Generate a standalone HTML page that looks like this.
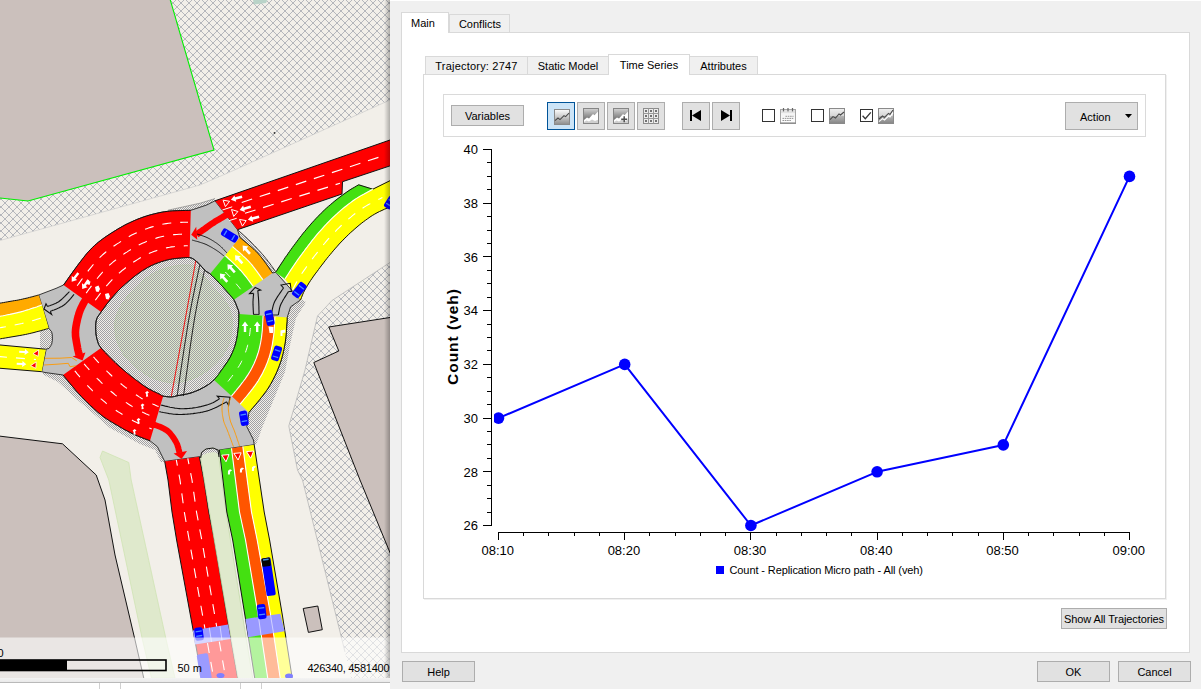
<!DOCTYPE html>
<html><head><meta charset="utf-8"><title>Trajectory</title>
<style>
html,body{margin:0;padding:0;}
body{width:1201px;height:689px;overflow:hidden;position:relative;background:#fff;font-family:"Liberation Sans", sans-serif;font-size:11px;color:#000;}
body>div{position:absolute;white-space:nowrap;}
.tab{text-align:center;}
.btn{background:#e1e1e1;border:1px solid #adadad;box-sizing:border-box;text-align:center;}
svg{position:absolute;left:0;top:0;}
</style></head><body>
<svg width="390" height="678" viewBox="0 0 390 678" style="left:0;top:0;overflow:hidden">
<defs>
<pattern id="xh" patternUnits="userSpaceOnUse" x="0" y="0" width="8" height="8"><g fill="#b5b7bc" shape-rendering="crispEdges"><rect x="0" y="6" width="1" height="1"/><rect x="0" y="7" width="1" height="1"/><rect x="1" y="6" width="1" height="1"/><rect x="1" y="7" width="1" height="1"/><rect x="2" y="0" width="1" height="1"/><rect x="2" y="5" width="1" height="1"/><rect x="3" y="1" width="1" height="1"/><rect x="3" y="4" width="1" height="1"/><rect x="4" y="2" width="1" height="1"/><rect x="4" y="3" width="1" height="1"/><rect x="5" y="2" width="1" height="1"/><rect x="5" y="3" width="1" height="1"/><rect x="6" y="1" width="1" height="1"/><rect x="6" y="4" width="1" height="1"/><rect x="7" y="0" width="1" height="1"/><rect x="7" y="5" width="1" height="1"/></g></pattern>
<pattern id="dn" patternUnits="userSpaceOnUse" x="0" y="0" width="2" height="2"><rect x="0" y="0" width="1" height="1" fill="#a0a0a4" shape-rendering="crispEdges"/><rect x="1" y="1" width="1" height="1" fill="#a0a0a4" shape-rendering="crispEdges"/></pattern>
<linearGradient id="shd" x1="0" x2="1" y1="0" y2="0"><stop offset="0" stop-color="#000" stop-opacity="0"/><stop offset="1" stop-color="#000" stop-opacity="0.28"/></linearGradient>
</defs>
<rect x="0" y="0" width="390" height="678" fill="#f2efe9"/>
<polygon points="0.0,0.0 390.0,0.0 390.0,100.0 230.0,172.0 200.0,185.0 0.0,240.5" fill="url(#xh)" />
<polygon points="390.0,262.5 332.0,300.5 317.5,316.0 305.0,370.0 288.8,426.0 297.5,470.0 302.5,480.0 345.0,652.0 354.0,690.0 392.0,690.0 392.0,262.0" fill="url(#xh)" />
<polyline points="390.0,262.5 332.0,300.5 317.5,316.0 305.0,370.0 288.8,426.0 297.5,470.0 302.5,480.0 345.0,652.0" fill="none" stroke="#b8b8b8" stroke-width="0.8" />
<polyline points="390.0,100.0 230.0,172.0 200.0,185.0 0.0,240.5" fill="none" stroke="#c8c8c8" stroke-width="0.6" />
<polygon points="0.0,0.0 170.0,0.0 214.0,150.0 28.0,201.0 0.0,198.0" fill="#cbc0bc" />
<polyline points="170.0,-1.0 214.0,150.0 28.0,201.0 0.0,198.0" fill="none" stroke="#00ee00" stroke-width="1.1" />
<polygon points="253.0,0.0 267.5,0.0 266.0,3.0 254.0,4.5" fill="#b9d3c8" />
<circle cx="274.5" cy="133" r="0.9" fill="#333"/>
<polygon points="392.0,317.2 328.8,327.0 338.8,351.0 313.8,362.5 360.0,480.0 392.0,557.5" fill="#cbc0bc" stroke="#111" stroke-width="1"/>
<polygon points="-3.0,435.8 62.5,443.8 96.2,475.0 105.0,500.0 115.0,555.0 135.0,640.0 146.5,690.0 -3.0,690.0" fill="#cbc0bc" stroke="#111" stroke-width="1"/>
<polygon points="303.2,608.5 317.8,606.0 322.3,629.7 308.4,632.4" fill="#cbc0bc" stroke="#111" stroke-width="1"/>
<polygon points="102.5,451.0 128.8,462.5 131.2,480.0 166.2,640.0 175.0,678.0 151.5,678.0 142.5,640.0 108.8,480.0 100.0,457.5" fill="#dfe9cc" stroke="#cfe3b4" stroke-width="0.8"/>
<polygon points="168.0,210.2 200.0,203.2 215.0,198.6 215.0,200.8 206.7,205.0 190.8,210.3" fill="url(#dn)" />
<polygon points="237.5,229.7 251.0,242.1 265.0,257.3 275.6,271.5 272.5,273.0 258.0,253.5 239.9,237.5" fill="url(#dn)" />
<polygon points="302.2,299.8 306.0,302.0 296.0,318.0 290.0,345.0 285.0,372.0 262.0,428.0 256.0,445.0 252.0,445.0 246.0,426.0 248.0,411.7 266.7,388.3 278.3,365.0 284.2,341.7 286.7,317.5 290.6,306.8" fill="url(#dn)" />
<polygon points="43.0,371.0 63.0,372.0 82.0,393.0 101.0,411.0 118.0,422.5 135.0,431.5 152.0,437.0 162.0,447.0 166.0,462.0 161.0,462.0 155.0,450.0 140.0,444.0 110.0,428.0 80.0,402.0 58.0,382.0 43.0,374.5" fill="url(#dn)" />
<polygon points="40.0,329.8 49.0,328.6 53.0,332.0 53.5,340.0 52.0,345.0 49.0,349.0 40.0,348.6" fill="url(#dn)" />
<polygon points="200.0,456.5 203.0,450.0 212.0,447.5 219.0,448.5 219.6,452.0 203.0,461.0" fill="url(#dn)" />
<polyline points="168.0,210.2 200.0,203.2 215.0,198.6" fill="none" stroke="#777" stroke-width="0.6" />
<polyline points="237.5,229.7 238.2,230.3 239.0,231.0 239.9,231.9 241.0,232.8 242.1,233.8 243.4,234.9 244.7,236.1 246.0,237.3 247.3,238.5 248.6,239.7 249.8,240.9 251.0,242.1 252.2,243.3 253.3,244.5 254.5,245.7 255.8,247.0 257.0,248.3 258.2,249.6 259.4,250.9 260.6,252.2 261.7,253.5 262.9,254.8 264.0,256.1 265.0,257.3 266.0,258.6 267.1,259.9 268.1,261.3 269.2,262.6 270.2,264.0 271.2,265.4 272.1,266.6 273.0,267.9 273.8,269.0 274.5,270.0 275.1,270.8 275.6,271.5" fill="none" stroke="#222" stroke-width="0.9" />
<polygon points="63.5,285.0 64.8,283.3 66.4,281.0 68.3,278.3 70.4,275.3 72.7,272.1 75.2,268.7 77.7,265.2 80.3,261.8 82.9,258.5 85.4,255.3 87.8,252.5 90.0,250.0 92.1,247.8 94.3,245.8 96.4,243.9 98.4,242.2 100.5,240.5 102.6,239.0 104.7,237.5 106.7,236.1 108.8,234.8 110.9,233.4 112.9,232.1 115.0,230.8 117.1,229.5 119.2,228.3 121.2,227.1 123.3,225.9 125.4,224.8 127.5,223.8 129.6,222.8 131.7,221.8 133.8,220.9 135.8,220.0 137.9,219.1 140.0,218.3 142.1,217.5 144.2,216.8 146.2,216.1 148.3,215.5 150.4,214.9 152.5,214.3 154.5,213.8 156.6,213.3 158.7,212.8 160.8,212.4 162.9,212.0 165.0,211.7 167.2,211.4 169.6,211.1 172.0,211.0 174.5,210.8 177.0,210.7 179.5,210.6 181.8,210.5 184.1,210.5 186.1,210.4 188.0,210.4 189.6,210.4 190.8,210.3 206.7,205.0 215.0,200.8 237.5,229.7 239.9,237.5 239.9,237.5 240.8,238.3 241.9,239.2 243.2,240.3 244.7,241.5 246.3,242.9 248.0,244.3 249.8,245.8 251.6,247.3 253.3,248.9 255.0,250.4 256.6,252.0 258.0,253.5 259.4,255.1 260.8,256.8 262.2,258.6 263.6,260.5 265.0,262.4 266.4,264.2 267.7,266.1 268.9,267.8 270.0,269.4 271.0,270.8 271.8,272.0 272.5,273.0 275.7,272.2 300.5,300.0 290.6,306.8 287.2,317.5 287.1,318.7 287.0,320.1 287.0,321.9 286.9,323.8 286.7,325.9 286.6,328.1 286.5,330.4 286.3,332.8 286.1,335.1 285.9,337.4 285.6,339.6 285.3,341.7 285.0,343.7 284.6,345.7 284.2,347.7 283.8,349.6 283.4,351.6 283.0,353.6 282.5,355.6 282.0,357.5 281.4,359.5 280.8,361.5 280.1,363.4 279.4,365.4 278.6,367.4 277.9,369.3 277.0,371.3 276.2,373.3 275.2,375.3 274.3,377.2 273.3,379.2 272.3,381.2 271.2,383.1 270.0,385.1 268.8,387.0 267.6,389.0 266.2,391.0 264.7,393.2 263.0,395.4 261.2,397.7 259.4,399.9 257.6,402.2 255.8,404.3 254.1,406.3 252.5,408.2 251.1,409.9 249.9,411.3 249.0,412.4 246.8,426.7 253.5,440.0 254.2,444.7 219.4,450.0 199.4,456.7 164.7,461.4 164.0,460.0 157.4,446.7 150.0,440.8 149.2,440.5 148.2,440.1 147.0,439.6 145.7,439.1 144.2,438.6 142.7,438.0 141.1,437.3 139.5,436.7 137.9,436.0 136.3,435.3 134.7,434.7 133.3,434.0 131.9,433.3 130.5,432.7 129.1,432.0 127.8,431.2 126.4,430.5 125.0,429.8 123.6,429.0 122.2,428.2 120.9,427.4 119.5,426.6 118.1,425.8 116.7,425.0 115.3,424.2 114.0,423.4 112.6,422.6 111.3,421.8 109.9,421.0 108.6,420.1 107.2,419.3 105.8,418.3 104.4,417.4 103.0,416.3 101.5,415.2 100.0,414.0 98.4,412.7 96.8,411.3 95.2,409.8 93.5,408.3 91.7,406.7 90.0,405.1 88.3,403.4 86.6,401.7 84.9,400.0 83.2,398.3 81.6,396.6 80.0,395.0 78.4,393.3 76.8,391.5 75.1,389.6 73.5,387.7 71.8,385.7 70.2,383.8 68.7,382.0 67.3,380.2 66.0,378.6 64.8,377.2 63.8,376.0 63.0,375.0 45.0,372.5 41.7,371.7 46.2,349.1 49.0,348.4 51.6,344.5 52.4,340.2 52.3,335.0 51.7,331.9 49.0,328.6 38.7,295.0 56.0,288.4" fill="#c0c0c0" stroke="#222" stroke-width="0.9" stroke-linejoin="round"/>
<polygon points="101.1,312.0 101.7,311.1 102.3,310.2 103.0,309.2 103.8,308.2 104.5,307.2 105.3,306.1 106.1,305.0 106.9,303.9 107.7,302.9 108.6,301.8 109.4,300.8 110.2,299.8 111.0,298.8 111.8,297.9 112.7,296.9 113.5,295.9 114.4,295.0 115.2,294.0 116.1,293.1 117.0,292.1 117.8,291.2 118.7,290.3 119.5,289.5 120.4,288.6 121.3,287.8 122.1,286.9 123.0,286.1 123.8,285.4 124.7,284.6 125.5,283.8 126.4,283.1 127.2,282.4 128.1,281.6 128.9,280.9 129.8,280.2 130.6,279.5 131.4,278.8 132.3,278.1 133.1,277.4 134.0,276.8 134.8,276.1 135.6,275.5 136.5,274.8 137.3,274.2 138.2,273.6 139.0,273.0 139.9,272.4 140.7,271.8 141.5,271.2 142.4,270.7 143.2,270.1 144.1,269.6 144.9,269.1 145.8,268.6 146.6,268.1 147.5,267.6 148.3,267.1 149.2,266.7 150.0,266.2 150.9,265.8 151.8,265.4 152.6,265.0 153.5,264.6 154.3,264.2 155.2,263.9 156.0,263.5 156.9,263.2 157.7,262.9 158.6,262.6 159.4,262.3 160.3,262.0 161.1,261.7 161.9,261.4 162.8,261.2 163.6,260.9 164.5,260.7 165.3,260.4 166.2,260.2 167.0,260.0 167.8,259.8 168.7,259.6 169.5,259.4 170.4,259.3 171.2,259.1 172.1,258.9 172.9,258.8 173.8,258.7 174.7,258.6 175.5,258.5 176.4,258.4 177.3,258.3 178.2,258.2 179.0,258.1 179.8,258.0 180.6,258.0 181.4,257.9 182.2,257.8 182.9,257.8 183.7,257.7 184.4,257.7 185.1,257.6 185.8,257.6 186.5,257.5 187.2,257.5 187.8,257.5 188.4,257.5 189.0,257.6 189.5,257.6 190.0,257.7 190.4,257.7 190.8,257.8 191.2,257.9 191.5,258.1 191.8,258.2 192.1,258.3 192.4,258.5 192.7,258.7 193.0,258.8 193.3,259.0 193.6,259.2 193.9,259.4 194.3,259.6 194.6,259.9 195.0,260.1 195.3,260.4 195.6,260.7 196.0,260.9 196.3,261.2 196.6,261.5 196.9,261.8 197.2,262.0 197.5,262.3 197.8,262.5 198.0,262.8 198.2,263.0 198.5,263.2 198.7,263.4 198.9,263.6 199.1,263.8 199.3,264.0 199.5,264.3 199.8,264.6 200.1,264.9 200.4,265.2 200.7,265.6 201.1,266.0 201.5,266.5 201.9,266.9 202.4,267.4 202.8,268.0 203.3,268.5 203.7,269.0 204.2,269.5 204.6,270.0 205.1,270.4 205.5,270.8 205.9,271.1 206.3,271.4 206.7,271.7 207.0,271.9 207.4,272.1 207.7,272.3 208.1,272.5 208.5,272.8 209.0,273.1 209.5,273.4 210.0,273.9 210.6,274.4 211.3,275.0 212.0,275.7 212.8,276.5 213.7,277.4 214.6,278.2 215.5,279.2 216.4,280.1 217.3,281.0 218.2,282.0 219.1,282.9 219.9,283.8 220.7,284.6 221.5,285.4 222.2,286.2 223.0,287.0 223.7,287.8 224.4,288.6 225.1,289.4 225.8,290.2 226.5,290.9 227.1,291.7 227.7,292.4 228.3,293.1 228.9,293.7 229.4,294.3 229.9,294.9 230.4,295.4 230.9,295.9 231.3,296.4 231.7,296.9 232.1,297.3 232.5,297.8 232.9,298.3 233.2,298.8 233.6,299.3 233.9,299.8 234.2,300.4 234.5,300.9 234.8,301.5 235.1,302.1 235.4,302.7 235.6,303.3 235.9,303.9 236.1,304.5 236.4,305.1 236.6,305.7 236.8,306.3 237.0,306.9 237.2,307.4 237.4,307.9 237.6,308.4 237.8,308.9 238.0,309.3 238.2,309.8 238.4,310.2 238.5,310.8 238.6,311.4 238.8,312.0 238.8,312.8 238.9,313.7 238.9,314.7 238.9,315.8 238.9,317.1 238.9,318.4 238.8,319.8 238.8,321.2 238.7,322.6 238.6,324.1 238.5,325.5 238.4,326.9 238.2,328.3 238.1,329.6 238.0,330.9 237.8,332.1 237.6,333.3 237.5,334.6 237.3,335.8 237.1,337.0 236.9,338.2 236.6,339.4 236.4,340.5 236.1,341.7 235.8,342.9 235.5,344.0 235.2,345.1 234.8,346.3 234.4,347.4 234.1,348.5 233.6,349.6 233.2,350.7 232.8,351.7 232.3,352.8 231.8,353.9 231.3,354.9 230.8,356.0 230.3,357.0 229.7,358.0 229.2,359.0 228.5,360.1 227.9,361.0 227.3,362.0 226.6,363.0 225.9,364.0 225.2,365.0 224.6,365.9 223.9,366.9 223.2,367.8 222.5,368.8 221.8,369.8 221.1,370.7 220.5,371.7 219.8,372.7 219.1,373.7 218.4,374.6 217.7,375.6 217.0,376.5 216.2,377.4 215.5,378.3 214.8,379.1 214.0,379.9 213.2,380.6 212.5,381.3 211.7,382.0 211.0,382.6 210.2,383.2 209.4,383.8 208.6,384.4 207.8,384.9 206.9,385.5 206.0,386.0 205.1,386.6 204.2,387.1 203.2,387.6 202.2,388.2 201.2,388.7 200.1,389.3 199.0,389.8 197.8,390.3 196.7,390.8 195.6,391.2 194.4,391.7 193.3,392.1 192.2,392.5 191.1,392.9 190.0,393.2 188.9,393.5 187.7,393.8 186.5,394.1 185.4,394.3 184.2,394.5 183.1,394.7 182.0,394.9 180.9,395.1 179.9,395.3 179.0,395.4 178.1,395.6 177.3,395.8 176.6,395.9 176.0,396.1 175.4,396.2 174.9,396.3 174.4,396.5 173.9,396.6 173.4,396.7 172.9,396.8 172.4,396.8 171.9,396.9 171.3,396.9 170.7,396.9 170.0,396.9 169.3,396.9 168.5,396.8 167.8,396.8 167.0,396.7 166.3,396.6 165.6,396.5 164.9,396.4 164.3,396.3 163.7,396.2 163.2,396.1 162.8,396.0 162.4,395.9 162.2,395.8 162.0,395.7 161.8,395.6 161.7,395.5 161.5,395.4 161.3,395.2 161.0,395.1 160.7,394.8 160.3,394.6 159.7,394.3 159.0,394.0 158.2,393.6 157.4,393.2 156.4,392.7 155.4,392.3 154.4,391.8 153.3,391.3 152.3,390.8 151.2,390.2 150.1,389.6 149.1,389.1 148.1,388.5 147.1,387.9 146.2,387.3 145.2,386.7 144.2,386.0 143.3,385.3 142.3,384.7 141.3,384.0 140.4,383.3 139.4,382.6 138.4,381.8 137.5,381.1 136.5,380.4 135.5,379.7 134.6,378.9 133.6,378.2 132.6,377.4 131.6,376.7 130.7,375.9 129.7,375.1 128.7,374.3 127.7,373.5 126.7,372.7 125.8,371.9 124.8,371.1 123.8,370.3 122.9,369.5 121.9,368.6 120.9,367.8 120.0,367.0 119.0,366.1 118.1,365.3 117.1,364.4 116.1,363.5 115.2,362.6 114.2,361.7 113.2,360.7 112.2,359.7 111.1,358.6 110.0,357.5 108.9,356.4 107.7,355.2 106.6,354.1 105.5,352.9 104.4,351.8 103.5,350.7 102.5,349.7 101.7,348.8 101.0,347.9 100.4,347.1 99.9,346.4 99.5,345.8 99.1,345.2 98.8,344.7 98.6,344.2 98.4,343.7 98.2,343.2 98.0,342.7 97.9,342.1 97.7,341.5 97.5,340.9 97.3,340.2 97.1,339.5 96.9,338.8 96.7,338.1 96.5,337.3 96.4,336.5 96.3,335.8 96.1,335.0 96.0,334.1 95.9,333.3 95.9,332.5 95.8,331.6 95.8,330.7 95.7,329.8 95.7,328.8 95.7,327.8 95.7,326.7 95.7,325.7 95.7,324.7 95.8,323.7 95.9,322.7 96.0,321.8 96.2,320.8 96.4,320.0 96.6,319.2 96.9,318.5 97.2,317.8 97.5,317.2 97.8,316.6 98.2,316.0 98.6,315.4 99.1,314.8 99.5,314.2 100.0,313.5 100.5,312.8" fill="#f2efe9" />
<polygon points="115.3,320.0 115.5,319.0 115.8,317.9 116.1,316.9 116.5,315.8 116.8,314.7 117.2,313.6 117.7,312.5 118.1,311.4 118.7,310.3 119.2,309.2 119.8,308.0 120.4,306.9 121.1,305.7 121.8,304.6 122.6,303.3 123.4,302.1 124.3,300.9 125.2,299.6 126.1,298.4 127.0,297.2 127.9,296.0 128.8,294.8 129.7,293.7 130.6,292.7 131.4,291.7 132.3,290.7 133.1,289.8 134.0,288.9 134.8,288.0 135.6,287.2 136.5,286.4 137.3,285.6 138.2,284.8 139.0,284.0 139.9,283.2 140.7,282.5 141.5,281.8 142.4,281.1 143.2,280.4 144.1,279.7 144.9,279.0 145.8,278.4 146.6,277.8 147.5,277.2 148.3,276.6 149.2,276.0 150.0,275.4 150.9,274.9 151.8,274.4 152.6,273.9 153.5,273.4 154.3,272.9 155.2,272.5 156.0,272.1 156.9,271.6 157.7,271.3 158.6,270.9 159.4,270.5 160.3,270.1 161.1,269.8 161.9,269.5 162.8,269.2 163.6,268.9 164.5,268.6 165.3,268.3 166.2,268.1 167.0,267.8 167.8,267.6 168.7,267.4 169.5,267.2 170.4,267.0 171.2,266.8 172.1,266.6 172.9,266.4 173.8,266.3 174.7,266.1 175.5,266.0 176.4,265.8 177.3,265.7 178.2,265.6 179.0,265.5 179.8,265.4 180.6,265.3 181.4,265.2 182.2,265.1 182.9,265.1 183.6,265.0 184.3,265.0 185.0,265.0 185.7,265.0 186.3,265.0 187.0,265.0 187.6,265.0 188.3,265.0 188.9,265.1 189.5,265.2 190.1,265.3 190.7,265.4 191.2,265.4 191.7,265.5 192.2,265.6 192.8,265.8 193.3,265.9 193.8,266.1 194.3,266.4 194.8,266.7 195.4,267.0 196.0,267.5 196.6,268.0 197.2,268.6 197.8,269.3 198.5,270.1 199.1,270.9 199.8,271.7 200.4,272.6 201.1,273.5 201.8,274.4 202.5,275.2 203.3,276.1 204.0,277.0 204.8,277.9 205.6,278.8 206.4,279.7 207.2,280.6 208.1,281.5 208.9,282.5 209.8,283.4 210.7,284.4 211.5,285.3 212.4,286.2 213.2,287.1 214.0,288.0 214.8,288.9 215.6,289.7 216.4,290.6 217.2,291.4 218.0,292.2 218.8,293.1 219.5,293.9 220.3,294.7 221.0,295.5 221.7,296.3 222.4,297.2 223.0,298.0 223.6,298.8 224.2,299.7 224.8,300.5 225.3,301.3 225.9,302.2 226.4,303.0 226.9,303.8 227.3,304.7 227.8,305.5 228.2,306.3 228.6,307.2 229.0,308.0 229.4,308.8 229.7,309.7 230.0,310.6 230.3,311.5 230.6,312.4 230.9,313.3 231.1,314.2 231.3,315.0 231.5,315.9 231.7,316.6 231.9,317.3 232.0,318.0 232.1,318.6 232.2,319.0 232.3,319.4 232.4,319.7 232.4,320.0 232.4,320.3 232.4,320.6 232.4,320.9 232.4,321.3 232.4,321.8 232.3,322.3 232.3,323.0 232.3,323.8 232.2,324.7 232.2,325.7 232.1,326.8 232.0,327.9 232.0,329.0 231.9,330.2 231.7,331.4 231.6,332.6 231.4,333.8 231.2,335.0 231.0,336.1 230.7,337.2 230.5,338.3 230.2,339.4 229.9,340.5 229.6,341.6 229.2,342.7 228.8,343.7 228.4,344.8 228.0,345.9 227.5,347.0 227.0,348.1 226.4,349.2 225.8,350.3 225.2,351.4 224.5,352.5 223.8,353.6 223.1,354.8 222.3,355.9 221.5,357.0 220.7,358.1 219.9,359.1 219.0,360.2 218.1,361.2 217.2,362.2 216.3,363.2 215.3,364.1 214.2,365.1 213.2,366.0 212.1,367.0 210.9,367.9 209.8,368.7 208.7,369.6 207.5,370.4 206.4,371.2 205.3,372.0 204.2,372.7 203.1,373.4 202.0,374.1 200.9,374.7 199.8,375.3 198.7,375.9 197.6,376.4 196.6,376.9 195.5,377.4 194.4,377.9 193.3,378.3 192.2,378.8 191.1,379.2 190.0,379.6 188.9,380.0 187.7,380.3 186.5,380.7 185.4,381.0 184.2,381.2 183.1,381.5 182.0,381.7 180.9,382.0 179.9,382.2 179.0,382.3 178.1,382.5 177.3,382.6 176.7,382.7 176.1,382.8 175.6,382.9 175.1,382.9 174.6,383.0 174.2,383.0 173.7,382.9 173.2,382.9 172.6,382.8 172.0,382.8 171.3,382.7 170.5,382.6 169.6,382.5 168.7,382.4 167.8,382.2 166.8,382.0 165.8,381.9 164.8,381.7 163.7,381.4 162.7,381.2 161.7,381.0 160.7,380.7 159.7,380.4 158.7,380.1 157.8,379.8 156.8,379.5 155.8,379.1 154.9,378.8 153.9,378.4 152.9,378.0 152.0,377.6 151.0,377.2 150.0,376.7 149.1,376.2 148.1,375.7 147.1,375.2 146.2,374.6 145.2,374.0 144.2,373.4 143.3,372.7 142.3,372.1 141.3,371.4 140.4,370.7 139.4,370.0 138.4,369.2 137.5,368.4 136.5,367.6 135.5,366.8 134.5,365.9 133.5,365.0 132.4,364.0 131.4,363.1 130.4,362.1 129.3,361.1 128.3,360.1 127.4,359.1 126.5,358.0 125.6,357.0 124.8,356.0 124.0,355.0 123.3,353.9 122.6,352.9 122.0,351.8 121.4,350.7 120.8,349.6 120.2,348.5 119.7,347.4 119.2,346.3 118.8,345.3 118.3,344.2 117.9,343.2 117.5,342.2 117.1,341.2 116.8,340.2 116.5,339.2 116.2,338.3 116.0,337.3 115.8,336.4 115.6,335.4 115.4,334.5 115.3,333.5 115.1,332.6 115.0,331.6 114.9,330.6 114.8,329.7 114.7,328.7 114.7,327.8 114.7,326.8 114.7,325.9 114.7,324.9 114.7,324.0 114.8,323.0 114.9,322.0 115.1,321.0" fill="#dfeacd" stroke="#cdeab0" stroke-width="0.9"/>
<polygon points="101.1,312.0 101.7,311.1 102.3,310.2 103.0,309.2 103.8,308.2 104.5,307.2 105.3,306.1 106.1,305.0 106.9,303.9 107.7,302.9 108.6,301.8 109.4,300.8 110.2,299.8 111.0,298.8 111.8,297.9 112.7,296.9 113.5,295.9 114.4,295.0 115.2,294.0 116.1,293.1 117.0,292.1 117.8,291.2 118.7,290.3 119.5,289.5 120.4,288.6 121.3,287.8 122.1,286.9 123.0,286.1 123.8,285.4 124.7,284.6 125.5,283.8 126.4,283.1 127.2,282.4 128.1,281.6 128.9,280.9 129.8,280.2 130.6,279.5 131.4,278.8 132.3,278.1 133.1,277.4 134.0,276.8 134.8,276.1 135.6,275.5 136.5,274.8 137.3,274.2 138.2,273.6 139.0,273.0 139.9,272.4 140.7,271.8 141.5,271.2 142.4,270.7 143.2,270.1 144.1,269.6 144.9,269.1 145.8,268.6 146.6,268.1 147.5,267.6 148.3,267.1 149.2,266.7 150.0,266.2 150.9,265.8 151.8,265.4 152.6,265.0 153.5,264.6 154.3,264.2 155.2,263.9 156.0,263.5 156.9,263.2 157.7,262.9 158.6,262.6 159.4,262.3 160.3,262.0 161.1,261.7 161.9,261.4 162.8,261.2 163.6,260.9 164.5,260.7 165.3,260.4 166.2,260.2 167.0,260.0 167.8,259.8 168.7,259.6 169.5,259.4 170.4,259.3 171.2,259.1 172.1,258.9 172.9,258.8 173.8,258.7 174.7,258.6 175.5,258.5 176.4,258.4 177.3,258.3 178.2,258.2 179.0,258.1 179.8,258.0 180.6,258.0 181.4,257.9 182.2,257.8 182.9,257.8 183.7,257.7 184.4,257.7 185.1,257.6 185.8,257.6 186.5,257.5 187.2,257.5 187.8,257.5 188.4,257.5 189.0,257.6 189.5,257.6 190.0,257.7 190.4,257.7 190.8,257.8 191.2,257.9 191.5,258.1 191.8,258.2 192.1,258.3 192.4,258.5 192.7,258.7 193.0,258.8 193.3,259.0 193.6,259.2 193.9,259.4 194.3,259.6 194.6,259.9 195.0,260.1 195.3,260.4 195.6,260.7 196.0,260.9 196.3,261.2 196.6,261.5 196.9,261.8 197.2,262.0 197.5,262.3 197.8,262.5 198.0,262.8 198.2,263.0 198.5,263.2 198.7,263.4 198.9,263.6 199.1,263.8 199.3,264.0 199.5,264.3 199.8,264.6 200.1,264.9 200.4,265.2 200.7,265.6 201.1,266.0 201.5,266.5 201.9,266.9 202.4,267.4 202.8,268.0 203.3,268.5 203.7,269.0 204.2,269.5 204.6,270.0 205.1,270.4 205.5,270.8 205.9,271.1 206.3,271.4 206.7,271.7 207.0,271.9 207.4,272.1 207.7,272.3 208.1,272.5 208.5,272.8 209.0,273.1 209.5,273.4 210.0,273.9 210.6,274.4 211.3,275.0 212.0,275.7 212.8,276.5 213.7,277.4 214.6,278.2 215.5,279.2 216.4,280.1 217.3,281.0 218.2,282.0 219.1,282.9 219.9,283.8 220.7,284.6 221.5,285.4 222.2,286.2 223.0,287.0 223.7,287.8 224.4,288.6 225.1,289.4 225.8,290.2 226.5,290.9 227.1,291.7 227.7,292.4 228.3,293.1 228.9,293.7 229.4,294.3 229.9,294.9 230.4,295.4 230.9,295.9 231.3,296.4 231.7,296.9 232.1,297.3 232.5,297.8 232.9,298.3 233.2,298.8 233.6,299.3 233.9,299.8 234.2,300.4 234.5,300.9 234.8,301.5 235.1,302.1 235.4,302.7 235.6,303.3 235.9,303.9 236.1,304.5 236.4,305.1 236.6,305.7 236.8,306.3 237.0,306.9 237.2,307.4 237.4,307.9 237.6,308.4 237.8,308.9 238.0,309.3 238.2,309.8 238.4,310.2 238.5,310.8 238.6,311.4 238.8,312.0 238.8,312.8 238.9,313.7 238.9,314.7 238.9,315.8 238.9,317.1 238.9,318.4 238.8,319.8 238.8,321.2 238.7,322.6 238.6,324.1 238.5,325.5 238.4,326.9 238.2,328.3 238.1,329.6 238.0,330.9 237.8,332.1 237.6,333.3 237.5,334.6 237.3,335.8 237.1,337.0 236.9,338.2 236.6,339.4 236.4,340.5 236.1,341.7 235.8,342.9 235.5,344.0 235.2,345.1 234.8,346.3 234.4,347.4 234.1,348.5 233.6,349.6 233.2,350.7 232.8,351.7 232.3,352.8 231.8,353.9 231.3,354.9 230.8,356.0 230.3,357.0 229.7,358.0 229.2,359.0 228.5,360.1 227.9,361.0 227.3,362.0 226.6,363.0 225.9,364.0 225.2,365.0 224.6,365.9 223.9,366.9 223.2,367.8 222.5,368.8 221.8,369.8 221.1,370.7 220.5,371.7 219.8,372.7 219.1,373.7 218.4,374.6 217.7,375.6 217.0,376.5 216.2,377.4 215.5,378.3 214.8,379.1 214.0,379.9 213.2,380.6 212.5,381.3 211.7,382.0 211.0,382.6 210.2,383.2 209.4,383.8 208.6,384.4 207.8,384.9 206.9,385.5 206.0,386.0 205.1,386.6 204.2,387.1 203.2,387.6 202.2,388.2 201.2,388.7 200.1,389.3 199.0,389.8 197.8,390.3 196.7,390.8 195.6,391.2 194.4,391.7 193.3,392.1 192.2,392.5 191.1,392.9 190.0,393.2 188.9,393.5 187.7,393.8 186.5,394.1 185.4,394.3 184.2,394.5 183.1,394.7 182.0,394.9 180.9,395.1 179.9,395.3 179.0,395.4 178.1,395.6 177.3,395.8 176.6,395.9 176.0,396.1 175.4,396.2 174.9,396.3 174.4,396.5 173.9,396.6 173.4,396.7 172.9,396.8 172.4,396.8 171.9,396.9 171.3,396.9 170.7,396.9 170.0,396.9 169.3,396.9 168.5,396.8 167.8,396.8 167.0,396.7 166.3,396.6 165.6,396.5 164.9,396.4 164.3,396.3 163.7,396.2 163.2,396.1 162.8,396.0 162.4,395.9 162.2,395.8 162.0,395.7 161.8,395.6 161.7,395.5 161.5,395.4 161.3,395.2 161.0,395.1 160.7,394.8 160.3,394.6 159.7,394.3 159.0,394.0 158.2,393.6 157.4,393.2 156.4,392.7 155.4,392.3 154.4,391.8 153.3,391.3 152.3,390.8 151.2,390.2 150.1,389.6 149.1,389.1 148.1,388.5 147.1,387.9 146.2,387.3 145.2,386.7 144.2,386.0 143.3,385.3 142.3,384.7 141.3,384.0 140.4,383.3 139.4,382.6 138.4,381.8 137.5,381.1 136.5,380.4 135.5,379.7 134.6,378.9 133.6,378.2 132.6,377.4 131.6,376.7 130.7,375.9 129.7,375.1 128.7,374.3 127.7,373.5 126.7,372.7 125.8,371.9 124.8,371.1 123.8,370.3 122.9,369.5 121.9,368.6 120.9,367.8 120.0,367.0 119.0,366.1 118.1,365.3 117.1,364.4 116.1,363.5 115.2,362.6 114.2,361.7 113.2,360.7 112.2,359.7 111.1,358.6 110.0,357.5 108.9,356.4 107.7,355.2 106.6,354.1 105.5,352.9 104.4,351.8 103.5,350.7 102.5,349.7 101.7,348.8 101.0,347.9 100.4,347.1 99.9,346.4 99.5,345.8 99.1,345.2 98.8,344.7 98.6,344.2 98.4,343.7 98.2,343.2 98.0,342.7 97.9,342.1 97.7,341.5 97.5,340.9 97.3,340.2 97.1,339.5 96.9,338.8 96.7,338.1 96.5,337.3 96.4,336.5 96.3,335.8 96.1,335.0 96.0,334.1 95.9,333.3 95.9,332.5 95.8,331.6 95.8,330.7 95.7,329.8 95.7,328.8 95.7,327.8 95.7,326.7 95.7,325.7 95.7,324.7 95.8,323.7 95.9,322.7 96.0,321.8 96.2,320.8 96.4,320.0 96.6,319.2 96.9,318.5 97.2,317.8 97.5,317.2 97.8,316.6 98.2,316.0 98.6,315.4 99.1,314.8 99.5,314.2 100.0,313.5 100.5,312.8" fill="url(#dn)" stroke="#111" stroke-width="1"/>
<polyline points="195.8,260.7 171.3,396.5" fill="none" stroke="#f00000" stroke-width="0.9" />
<polyline points="199.7,265.2 199.2,267.8 198.5,270.9 197.7,274.6 196.9,278.6 195.9,283.1 194.9,287.8 193.9,292.9 192.8,298.1 191.7,303.5 190.7,309.0 189.7,314.5 188.7,320.0 187.7,325.8 186.7,332.3 185.6,339.3 184.4,346.6 183.3,354.0 182.2,361.4 181.1,368.6 180.1,375.5 179.2,381.8 178.4,387.5 177.7,392.3 177.1,396.0" fill="none" stroke="#111" stroke-width="0.9" />
<polyline points="204.5,270.3 204.0,272.6 203.4,275.4 202.7,278.6 201.9,282.2 201.0,286.2 200.1,290.4 199.1,294.9 198.1,299.6 197.1,304.6 196.2,309.6 195.2,314.8 194.3,320.0 193.4,325.7 192.4,332.0 191.4,338.9 190.3,346.2 189.3,353.7 188.3,361.1 187.3,368.4 186.3,375.3 185.5,381.7 184.7,387.4 184.0,392.2 183.5,396.0" fill="none" stroke="#111" stroke-width="0.9" />
<polygon points="215.0,200.8 392.0,139.3 392.0,165.2 342.5,181.7 342.0,194.0 237.5,229.7" fill="#ff0000" />
<polyline points="215.0,200.8 392.0,139.3" fill="none" stroke="#111" stroke-width="1" />
<polyline points="392.0,165.2 342.5,181.7 342.0,194.0 237.5,229.7" fill="none" stroke="#111" stroke-width="1" />
<polygon points="-3.0,303.6 -1.8,303.4 -0.4,303.2 1.4,302.9 3.4,302.6 5.5,302.2 7.7,301.8 10.0,301.4 12.3,301.0 14.6,300.6 16.8,300.3 18.8,299.9 20.7,299.5 22.5,299.1 24.2,298.7 26.0,298.3 27.8,297.9 29.5,297.4 31.2,297.0 32.8,296.6 34.2,296.2 35.6,295.8 36.8,295.5 37.8,295.2 38.7,295.0 42.0,305.0 41.0,305.3 39.7,305.8 38.2,306.3 36.6,306.9 34.8,307.5 32.8,308.1 30.8,308.8 28.8,309.5 26.7,310.1 24.6,310.8 22.6,311.4 20.7,311.9 18.7,312.4 16.6,312.9 14.4,313.4 12.1,313.9 9.8,314.4 7.5,314.8 5.3,315.3 3.2,315.7 1.3,316.0 -0.4,316.4 -1.8,316.7 -3.0,316.9" fill="#ffaa00" />
<polygon points="-3.0,316.9 -1.8,316.7 -0.4,316.4 1.3,316.0 3.2,315.7 5.3,315.3 7.5,314.8 9.8,314.4 12.1,313.9 14.4,313.4 16.6,312.9 18.7,312.4 20.7,311.9 22.6,311.4 24.6,310.8 26.7,310.1 28.8,309.5 30.8,308.8 32.8,308.1 34.8,307.5 36.6,306.9 38.2,306.3 39.7,305.8 41.0,305.3 42.0,305.0 48.7,328.4 47.7,328.7 46.5,329.0 45.1,329.4 43.6,329.9 41.9,330.3 40.1,330.9 38.1,331.4 36.1,331.9 34.0,332.5 31.9,333.0 29.8,333.5 27.6,334.0 25.3,334.5 22.7,335.0 19.9,335.5 17.0,336.0 14.0,336.5 11.0,337.0 8.1,337.5 5.3,338.0 2.7,338.4 0.4,338.8 -1.5,339.1 -3.0,339.4" fill="#ffff00" />
<polyline points="-3.0,303.6 -1.8,303.4 -0.4,303.2 1.4,302.9 3.4,302.6 5.5,302.2 7.7,301.8 10.0,301.4 12.3,301.0 14.6,300.6 16.8,300.3 18.8,299.9 20.7,299.5 22.5,299.1 24.2,298.7 26.0,298.3 27.8,297.9 29.5,297.4 31.2,297.0 32.8,296.6 34.2,296.2 35.6,295.8 36.8,295.5 37.8,295.2 38.7,295.0" fill="none" stroke="#111" stroke-width="1" />
<polyline points="-3.0,339.4 -1.5,339.1 0.4,338.8 2.7,338.4 5.3,338.0 8.1,337.5 11.0,337.0 14.0,336.5 17.0,336.0 19.9,335.5 22.7,335.0 25.3,334.5 27.6,334.0 29.8,333.5 31.9,333.0 34.0,332.5 36.1,331.9 38.1,331.4 40.1,330.9 41.9,330.3 43.6,329.9 45.1,329.4 46.5,329.0 47.7,328.7 48.7,328.4" fill="none" stroke="#111" stroke-width="1" />
<polygon points="-2.0,344.8 45.8,349.2 41.7,371.7 -2.0,368.1" fill="#ffff00" />
<polyline points="-2.0,344.8 45.8,349.2" fill="none" stroke="#111" stroke-width="1" />
<polyline points="-2.0,368.1 41.7,371.7" fill="none" stroke="#111" stroke-width="1" />
<polygon points="101.1,312.0 102.2,310.5 103.3,309.0 104.3,307.5 105.4,306.0 106.5,304.6 107.6,303.1 108.7,301.6 109.9,300.2 111.0,298.8 112.2,297.4 113.4,296.0 114.7,294.6 115.9,293.3 117.2,291.9 118.4,290.6 119.7,289.3 121.0,288.0 122.3,286.7 123.7,285.5 125.1,284.2 126.4,283.0 127.8,281.8 129.2,280.6 130.6,279.5 132.1,278.3 133.5,277.1 134.9,276.0 136.4,274.9 137.9,273.8 139.4,272.7 140.9,271.7 142.4,270.7 144.0,269.7 145.5,268.7 147.1,267.8 148.7,266.9 150.4,266.1 152.0,265.3 153.7,264.5 155.4,263.8 157.1,263.1 158.8,262.5 160.6,261.9 162.3,261.3 164.1,260.8 165.8,260.3 167.6,259.9 169.4,259.5 171.2,259.1 173.0,258.8 174.8,258.5 176.7,258.3 178.5,258.2 180.3,258.0 182.2,257.8 184.0,257.7 185.8,257.6 187.7,257.5 189.5,257.4 190.8,210.3 188.2,210.4 185.5,210.4 182.9,210.5 180.3,210.6 177.6,210.7 175.0,210.8 172.4,210.9 169.8,211.1 167.1,211.4 164.5,211.8 161.9,212.2 159.4,212.7 156.8,213.3 154.2,213.9 151.7,214.5 149.1,215.2 146.6,216.0 144.1,216.8 141.6,217.7 139.2,218.6 136.7,219.6 134.3,220.6 131.9,221.7 129.5,222.8 127.1,223.9 124.8,225.1 122.5,226.4 120.2,227.7 117.9,229.0 115.7,230.4 113.4,231.8 111.2,233.2 109.0,234.6 106.8,236.1 104.6,237.5 102.5,239.1 100.4,240.7 98.3,242.3 96.3,244.0 94.3,245.7 92.4,247.5 90.6,249.4 88.8,251.3 87.0,253.3 85.4,255.3 83.7,257.4 82.1,259.5 80.5,261.6 78.9,263.7 77.3,265.8 75.8,267.9 74.2,270.0 72.7,272.2 71.2,274.3 69.6,276.4 68.1,278.6 66.6,280.7 65.1,282.9 63.5,285.0" fill="#ff0000" />
<polygon points="101.0,347.9 101.9,348.9 102.8,349.9 103.8,350.8 104.7,351.8 105.6,352.8 106.5,353.8 107.4,354.8 108.4,355.7 109.3,356.7 110.2,357.7 111.1,358.6 112.1,359.6 113.0,360.5 114.0,361.5 115.0,362.4 116.0,363.3 117.0,364.2 117.9,365.1 118.9,366.0 120.0,366.9 121.0,367.8 122.0,368.7 123.0,369.6 124.0,370.4 125.0,371.3 126.1,372.2 127.1,373.0 128.2,373.9 129.2,374.7 130.2,375.6 131.3,376.4 132.4,377.2 133.4,378.1 134.5,378.9 135.6,379.7 136.6,380.5 137.7,381.3 138.8,382.1 139.9,382.9 140.9,383.7 142.0,384.5 143.1,385.3 144.2,386.0 145.4,386.8 146.5,387.5 147.6,388.2 148.8,388.9 150.0,389.5 151.1,390.2 152.3,390.8 153.5,391.4 154.8,392.0 156.0,392.5 157.2,393.1 158.4,393.7 159.6,394.3 160.8,394.9 162.0,395.5 163.2,396.1 150.0,440.8 148.3,440.1 146.5,439.4 144.7,438.8 143.0,438.1 141.2,437.4 139.5,436.7 137.8,436.0 136.0,435.2 134.3,434.5 132.6,433.7 130.9,432.9 129.3,432.0 127.6,431.1 125.9,430.3 124.3,429.4 122.6,428.5 121.0,427.5 119.4,426.6 117.8,425.6 116.2,424.7 114.5,423.7 112.9,422.8 111.3,421.8 109.7,420.8 108.1,419.8 106.5,418.8 105.0,417.8 103.5,416.7 101.9,415.5 100.5,414.4 99.0,413.2 97.6,412.0 96.2,410.7 94.8,409.5 93.4,408.2 92.0,406.9 90.6,405.7 89.3,404.4 87.9,403.0 86.6,401.7 85.3,400.4 83.9,399.1 82.6,397.7 81.3,396.4 80.0,395.0 78.7,393.7 77.5,392.3 76.2,390.9 75.0,389.4 73.8,388.0 72.6,386.6 71.4,385.1 70.2,383.7 69.0,382.3 67.8,380.8 66.6,379.3 65.4,377.9 64.2,376.4 63.0,375.0" fill="#ff0000" />
<polygon points="210.4,273.6 211.2,274.5 212.1,275.4 212.9,276.3 213.7,277.1 214.6,278.0 215.4,278.9 216.2,279.8 217.1,280.7 217.9,281.6 218.7,282.5 219.5,283.3 220.4,284.2 221.2,285.1 222.0,286.0 222.8,286.9 223.6,287.8 224.5,288.7 225.3,289.6 226.1,290.5 226.9,291.4 227.7,292.3 228.5,293.2 229.3,294.2 230.1,295.1 230.9,296.0 231.6,297.0 232.4,297.9 233.1,298.9 233.9,299.8 253.2,286.4 252.3,285.2 251.5,284.1 250.6,282.9 249.8,281.8 248.9,280.6 248.0,279.5 247.1,278.3 246.3,277.2 245.4,276.1 244.4,274.9 243.5,273.8 242.6,272.7 241.7,271.6 240.7,270.5 239.7,269.5 238.7,268.4 237.7,267.4 236.7,266.4 235.7,265.4 234.6,264.4 233.6,263.4 232.6,262.4 231.5,261.4 230.4,260.4 229.4,259.5 228.3,258.5 227.3,257.5 226.2,256.5 225.2,255.6" fill="#44e011" />
<polygon points="225.2,255.6 226.2,256.5 227.3,257.5 228.3,258.5 229.4,259.5 230.4,260.4 231.5,261.4 232.6,262.4 233.6,263.4 234.6,264.4 235.7,265.4 236.7,266.4 237.7,267.4 238.7,268.4 239.7,269.5 240.7,270.5 241.7,271.6 242.6,272.7 243.5,273.8 244.4,274.9 245.4,276.1 246.3,277.2 247.1,278.3 248.0,279.5 248.9,280.6 249.8,281.8 250.6,282.9 251.5,284.1 252.3,285.2 253.2,286.4 262.9,279.7 261.9,278.4 261.0,277.2 260.1,275.9 259.2,274.6 258.3,273.4 257.4,272.1 256.5,270.9 255.5,269.6 254.6,268.4 253.6,267.2 252.7,265.9 251.7,264.7 250.7,263.5 249.7,262.4 248.6,261.2 247.5,260.1 246.4,259.0 245.3,257.9 244.2,256.8 243.0,255.8 241.9,254.7 240.7,253.7 239.6,252.7 238.4,251.6 237.2,250.6 236.0,249.6 234.9,248.6 233.7,247.6 232.5,246.5" fill="#ffff00" />
<polygon points="232.5,246.5 233.7,247.6 234.9,248.6 236.0,249.6 237.2,250.6 238.4,251.6 239.6,252.7 240.7,253.7 241.9,254.7 243.0,255.8 244.2,256.8 245.3,257.9 246.4,259.0 247.5,260.1 248.6,261.2 249.7,262.4 250.7,263.5 251.7,264.7 252.7,265.9 253.6,267.2 254.6,268.4 255.5,269.6 256.5,270.9 257.4,272.1 258.3,273.4 259.2,274.6 260.1,275.9 261.0,277.2 261.9,278.4 262.9,279.7 272.5,273.0 271.5,271.6 270.6,270.3 269.6,268.9 268.7,267.5 267.7,266.1 266.8,264.8 265.8,263.4 264.8,262.1 263.8,260.7 262.8,259.4 261.8,258.0 260.8,256.7 259.7,255.4 258.6,254.2 257.5,252.9 256.3,251.7 255.1,250.6 253.9,249.4 252.7,248.3 251.4,247.2 250.2,246.1 248.9,245.0 247.6,243.9 246.3,242.8 245.0,241.8 243.8,240.7 242.5,239.7 241.2,238.6 239.9,237.5" fill="#ffaa00" />
<polygon points="238.9,313.9 238.8,315.4 238.8,316.9 238.7,318.3 238.7,319.8 238.6,321.3 238.6,322.8 238.5,324.3 238.4,325.7 238.3,327.2 238.2,328.7 238.0,330.2 237.9,331.6 237.7,333.1 237.5,334.6 237.2,336.0 237.0,337.5 236.7,338.9 236.4,340.4 236.1,341.8 235.7,343.3 235.3,344.7 234.9,346.1 234.4,347.5 233.9,348.9 233.4,350.3 232.8,351.7 232.2,353.0 231.6,354.4 231.0,355.7 230.3,357.0 229.6,358.3 228.8,359.6 228.0,360.8 227.2,362.1 226.4,363.3 225.6,364.5 224.7,365.7 223.8,366.9 223.0,368.1 222.1,369.3 221.2,370.5 220.4,371.7 219.5,372.9 218.6,374.1 217.6,375.2 216.7,376.4 215.8,377.6 214.9,378.7 214.0,379.9 231.5,396.1 232.6,394.7 233.8,393.3 234.9,391.9 236.1,390.5 237.2,389.1 238.4,387.7 239.5,386.3 240.6,384.9 241.7,383.4 242.8,382.0 243.9,380.5 245.0,379.1 246.0,377.6 247.0,376.1 248.0,374.6 249.0,373.0 249.9,371.5 250.8,369.9 251.7,368.3 252.5,366.7 253.3,365.1 254.1,363.4 254.8,361.8 255.5,360.1 256.2,358.4 256.8,356.7 257.4,355.0 258.0,353.3 258.5,351.6 259.0,349.8 259.4,348.1 259.8,346.3 260.2,344.5 260.6,342.7 260.9,341.0 261.2,339.2 261.5,337.4 261.7,335.6 261.9,333.8 262.1,332.0 262.3,330.2 262.4,328.4 262.5,326.6 262.6,324.8 262.7,322.9 262.8,321.1 262.9,319.3 263.0,317.5 263.1,315.7" fill="#44e011" />
<polygon points="263.1,315.7 263.0,317.5 262.9,319.3 262.8,321.1 262.7,322.9 262.6,324.8 262.5,326.6 262.4,328.4 262.3,330.2 262.1,332.0 261.9,333.8 261.7,335.6 261.5,337.4 261.2,339.2 260.9,341.0 260.6,342.7 260.2,344.5 259.8,346.3 259.4,348.1 259.0,349.8 258.5,351.6 258.0,353.3 257.4,355.0 256.8,356.7 256.2,358.4 255.5,360.1 254.8,361.8 254.1,363.4 253.3,365.1 252.5,366.7 251.7,368.3 250.8,369.9 249.9,371.5 249.0,373.0 248.0,374.6 247.0,376.1 246.0,377.6 245.0,379.1 243.9,380.5 242.8,382.0 241.7,383.4 240.6,384.9 239.5,386.3 238.4,387.7 237.2,389.1 236.1,390.5 234.9,391.9 233.8,393.3 232.6,394.7 231.5,396.1 240.1,404.1 241.3,402.6 242.6,401.1 243.8,399.5 245.1,398.0 246.4,396.5 247.6,395.0 248.9,393.4 250.1,391.9 251.3,390.3 252.5,388.8 253.7,387.2 254.9,385.6 256.0,384.0 257.1,382.4 258.2,380.7 259.2,379.0 260.2,377.3 261.2,375.6 262.2,373.9 263.1,372.1 263.9,370.3 264.8,368.5 265.6,366.7 266.3,364.9 267.1,363.1 267.8,361.2 268.4,359.4 269.1,357.5 269.7,355.6 270.2,353.7 270.7,351.8 271.2,349.9 271.6,348.0 272.0,346.0 272.4,344.1 272.7,342.1 273.0,340.2 273.3,338.2 273.6,336.3 273.8,334.3 274.0,332.4 274.1,330.4 274.3,328.4 274.4,326.4 274.5,324.5 274.6,322.5 274.7,320.5 274.8,318.6 274.9,316.6" fill="#ff5500" />
<polygon points="274.9,316.6 274.8,318.6 274.7,320.5 274.6,322.5 274.5,324.5 274.4,326.4 274.3,328.4 274.1,330.4 274.0,332.4 273.8,334.3 273.6,336.3 273.3,338.2 273.0,340.2 272.7,342.1 272.4,344.1 272.0,346.0 271.6,348.0 271.2,349.9 270.7,351.8 270.2,353.7 269.7,355.6 269.1,357.5 268.4,359.4 267.8,361.2 267.1,363.1 266.3,364.9 265.6,366.7 264.8,368.5 263.9,370.3 263.1,372.1 262.2,373.9 261.2,375.6 260.2,377.3 259.2,379.0 258.2,380.7 257.1,382.4 256.0,384.0 254.9,385.6 253.7,387.2 252.5,388.8 251.3,390.3 250.1,391.9 248.9,393.4 247.6,395.0 246.4,396.5 245.1,398.0 243.8,399.5 242.6,401.1 241.3,402.6 240.1,404.1 249.0,412.4 250.4,410.7 251.7,409.1 253.1,407.5 254.5,405.8 255.9,404.2 257.3,402.5 258.6,400.9 260.0,399.2 261.3,397.5 262.6,395.9 263.9,394.1 265.2,392.4 266.5,390.7 267.7,388.9 268.8,387.1 269.9,385.3 271.0,383.4 272.0,381.5 273.1,379.6 274.0,377.7 275.0,375.8 275.9,373.9 276.8,371.9 277.6,369.9 278.4,367.9 279.2,365.9 279.9,363.9 280.6,361.9 281.3,359.9 281.9,357.8 282.4,355.7 283.0,353.6 283.4,351.6 283.9,349.5 284.3,347.4 284.7,345.2 285.1,343.1 285.4,341.0 285.7,338.9 285.9,336.8 286.1,334.6 286.3,332.5 286.5,330.3 286.6,328.2 286.7,326.1 286.8,323.9 287.0,321.8 287.1,319.6 287.2,317.5" fill="#ffff00" />
<polygon points="275.7,272.2 277.1,270.1 278.4,268.0 279.8,265.9 281.1,263.9 282.5,261.8 283.9,259.7 285.2,257.6 286.7,255.6 288.1,253.6 289.5,251.5 291.0,249.5 292.4,247.5 293.9,245.5 295.4,243.5 296.9,241.5 298.4,239.5 299.9,237.5 301.4,235.6 302.9,233.6 304.5,231.7 306.1,229.8 307.7,227.8 309.3,226.0 310.9,224.1 312.6,222.2 314.3,220.4 315.9,218.6 317.7,216.8 319.4,215.0 321.2,213.2 322.9,211.5 324.7,209.8 326.5,208.1 328.4,206.4 330.3,204.8 332.2,203.2 334.1,201.6 336.0,200.0 338.0,198.5 340.0,197.0 341.9,195.5 344.0,194.0 346.0,192.6 348.0,191.2 350.1,189.8 352.2,188.5 354.4,187.3 356.5,186.0 358.7,184.8 372.8,189.2 372.8,189.2 370.5,190.4 368.2,191.7 366.0,192.9 363.7,194.2 361.4,195.4 359.2,196.7 357.0,198.1 354.8,199.5 352.7,201.0 350.6,202.6 348.5,204.1 346.5,205.7 344.5,207.3 342.5,208.9 340.5,210.6 338.5,212.3 336.6,214.1 334.7,215.8 332.8,217.6 331.0,219.4 329.1,221.3 327.3,223.1 325.6,225.0 323.8,226.9 322.1,228.8 320.3,230.8 318.6,232.7 316.9,234.7 315.3,236.7 313.7,238.7 312.0,240.7 310.4,242.8 308.8,244.8 307.3,246.9 305.7,248.9 304.2,251.0 302.6,253.1 301.1,255.2 299.5,257.3 298.0,259.4 296.5,261.5 295.1,263.6 293.6,265.8 292.2,267.9 290.7,270.1 289.3,272.3 287.9,274.5 286.5,276.6 285.1,278.8" fill="#44e011" stroke="#44e011" stroke-width="0.5"/>
<polygon points="285.1,278.8 286.5,276.6 287.9,274.5 289.3,272.3 290.7,270.1 292.2,267.9 293.6,265.8 295.1,263.6 296.5,261.5 298.0,259.4 299.5,257.3 301.1,255.2 302.6,253.1 304.2,251.0 305.7,248.9 307.3,246.9 308.8,244.8 310.4,242.8 312.0,240.7 313.7,238.7 315.3,236.7 316.9,234.7 318.6,232.7 320.3,230.8 322.1,228.8 323.8,226.9 325.6,225.0 327.3,223.1 329.1,221.3 331.0,219.4 332.8,217.6 334.7,215.8 336.6,214.1 338.5,212.3 340.5,210.6 342.5,208.9 344.5,207.3 346.5,205.7 348.5,204.1 350.6,202.6 352.7,201.0 354.8,199.5 357.0,198.1 359.2,196.7 361.4,195.4 363.7,194.2 366.0,192.9 368.2,191.7 370.5,190.4 372.8,189.2 392.0,179.7 392.0,206.0 389.5,207.1 387.0,208.2 384.5,209.2 382.0,210.4 379.5,211.5 377.0,212.8 374.7,214.1 372.3,215.5 370.0,217.0 367.8,218.6 365.6,220.2 363.4,221.8 361.2,223.5 359.1,225.2 357.0,227.0 354.9,228.8 352.9,230.6 350.8,232.4 348.8,234.3 346.9,236.2 344.9,238.1 343.0,240.1 341.1,242.0 339.2,244.0 337.4,246.1 335.6,248.1 333.8,250.2 332.0,252.3 330.3,254.4 328.5,256.5 326.8,258.6 325.1,260.8 323.5,262.9 321.8,265.1 320.1,267.3 318.5,269.5 316.9,271.7 315.2,273.9 313.6,276.1 312.1,278.3 310.5,280.6 309.0,282.9 307.6,285.2 306.2,287.6 304.8,290.0 303.6,292.4 302.5,294.9 301.5,297.5 300.5,300.0" fill="#ffff00" stroke="#ffff00" stroke-width="0.5"/>
<polyline points="275.7,272.2 277.1,270.1 278.4,268.0 279.8,265.9 281.1,263.9 282.5,261.8 283.9,259.7 285.2,257.6 286.7,255.6 288.1,253.6 289.5,251.5 291.0,249.5 292.4,247.5 293.9,245.5 295.4,243.5 296.9,241.5 298.4,239.5 299.9,237.5 301.4,235.6 302.9,233.6 304.5,231.7 306.1,229.8 307.7,227.8 309.3,226.0 310.9,224.1 312.6,222.2 314.3,220.4 315.9,218.6 317.7,216.8 319.4,215.0 321.2,213.2 322.9,211.5 324.7,209.8 326.5,208.1 328.4,206.4 330.3,204.8 332.2,203.2 334.1,201.6 336.0,200.0 338.0,198.5 340.0,197.0 341.9,195.5 344.0,194.0 346.0,192.6 348.0,191.2 350.1,189.8 352.2,188.5 354.4,187.3 356.5,186.0 358.7,184.8 372.8,189.2 392.0,179.7" fill="none" stroke="#111" stroke-width="1" />
<polyline points="300.5,300.0 301.5,297.5 302.5,294.9 303.6,292.4 304.8,290.0 306.2,287.6 307.6,285.2 309.0,282.9 310.5,280.6 312.1,278.3 313.6,276.1 315.2,273.9 316.9,271.7 318.5,269.5 320.1,267.3 321.8,265.1 323.5,262.9 325.1,260.8 326.8,258.6 328.5,256.5 330.3,254.4 332.0,252.3 333.8,250.2 335.6,248.1 337.4,246.1 339.2,244.0 341.1,242.0 343.0,240.1 344.9,238.1 346.9,236.2 348.8,234.3 350.8,232.4 352.9,230.6 354.9,228.8 357.0,227.0 359.1,225.2 361.2,223.5 363.4,221.8 365.6,220.2 367.8,218.6 370.0,217.0 372.3,215.5 374.7,214.1 377.0,212.8 379.5,211.5 382.0,210.4 384.5,209.2 387.0,208.2 389.5,207.1 392.0,206.0" fill="none" stroke="#111" stroke-width="1" />
<polygon points="164.7,461.4 168.0,480.0 172.0,512.0 176.6,540.0 192.2,625.0 202.0,680.0 238.0,680.0 228.5,625.0 214.4,540.0 208.8,512.0 204.0,480.0 199.4,456.7" fill="#ff0000" />
<polyline points="164.7,461.4 168.0,480.0 172.0,512.0 176.6,540.0 192.2,625.0 202.0,680.0" fill="none" stroke="#111" stroke-width="1" />
<polyline points="199.4,456.7 204.0,480.0 208.8,512.0 214.4,540.0 228.5,625.0 238.0,680.0" fill="none" stroke="#111" stroke-width="1" />
<polygon points="200.7,458.0 201.5,452.5 206.0,449.0 213.0,448.0 218.0,450.0 218.8,457.0 226.0,512.0 244.0,625.0 253.0,680.0 238.5,680.0 228.8,625.0 209.5,512.0" fill="#dfe9cc" stroke="#c4dba8" stroke-width="0.8"/>
<polygon points="201.0,456.0 201.5,452.5 206.0,449.0 213.0,448.0 218.0,450.0 218.8,454.0 214.0,452.0 207.0,453.0" fill="#f2efe9" />
<polygon points="201.0,456.0 201.5,452.5 206.0,449.0 213.0,448.0 218.0,450.0 218.8,454.0 214.0,452.0 207.0,453.0" fill="url(#dn)" />
<polyline points="200.7,458.0 201.5,452.5 206.0,449.0 213.0,448.0 218.0,450.0 219.0,457.0" fill="none" stroke="#111" stroke-width="1" />
<polygon points="219.4,450.0 226.8,512.0 232.7,540.0 245.5,618.9 255.0,680.0 268.0,680.0 258.7,618.0 245.5,540.0 239.5,512.0 231.5,448.2" fill="#44e011" />
<polygon points="231.5,448.2 239.5,512.0 245.5,540.0 258.7,618.0 268.0,680.0 280.5,680.0 271.0,617.0 257.2,540.0 251.5,512.0 242.8,446.4" fill="#ff5500" />
<polygon points="242.8,446.4 251.5,512.0 257.2,540.0 271.0,617.0 280.5,680.0 292.5,680.0 282.5,616.0 269.6,540.0 264.2,512.0 254.2,444.7" fill="#ffff00" />
<polyline points="219.4,450.0 226.8,512.0 232.7,540.0 245.5,618.9 255.0,680.0" fill="none" stroke="#111" stroke-width="1" />
<polyline points="254.2,444.7 264.2,512.0 269.6,540.0 282.5,616.0 292.5,680.0" fill="none" stroke="#111" stroke-width="1" />
<polyline points="63.5,285.0 65.1,282.9 66.6,280.7 68.1,278.6 69.6,276.4 71.2,274.3 72.7,272.2 74.2,270.0 75.8,267.9 77.3,265.8 78.9,263.7 80.5,261.6 82.1,259.5 83.7,257.4 85.4,255.3 87.0,253.3 88.8,251.3 90.6,249.4 92.4,247.5 94.3,245.7 96.3,244.0 98.3,242.3 100.4,240.7 102.5,239.1 104.6,237.5 106.8,236.1 109.0,234.6 111.2,233.2 113.4,231.8 115.7,230.4 117.9,229.0 120.2,227.7 122.5,226.4 124.8,225.1 127.1,223.9 129.5,222.8 131.9,221.7 134.3,220.6 136.7,219.6 139.2,218.6 141.6,217.7 144.1,216.8 146.6,216.0 149.1,215.2 151.7,214.5 154.2,213.9 156.8,213.3 159.4,212.7 161.9,212.2 164.5,211.8 167.1,211.4 169.8,211.1 172.4,210.9 175.0,210.8 177.6,210.7 180.3,210.6 182.9,210.5 185.5,210.4 188.2,210.4 190.8,210.3" fill="none" stroke="#111" stroke-width="1" />
<polyline points="63.0,375.0 64.2,376.4 65.4,377.9 66.6,379.3 67.8,380.8 69.0,382.3 70.2,383.7 71.4,385.1 72.6,386.6 73.8,388.0 75.0,389.4 76.2,390.9 77.5,392.3 78.7,393.7 80.0,395.0 81.3,396.4 82.6,397.7 83.9,399.1 85.3,400.4 86.6,401.7 87.9,403.0 89.3,404.4 90.6,405.7 92.0,406.9 93.4,408.2 94.8,409.5 96.2,410.7 97.6,412.0 99.0,413.2 100.5,414.4 101.9,415.5 103.5,416.7 105.0,417.8 106.5,418.8 108.1,419.8 109.7,420.8 111.3,421.8 112.9,422.8 114.5,423.7 116.2,424.7 117.8,425.6 119.4,426.6 121.0,427.5 122.6,428.5 124.3,429.4 125.9,430.3 127.6,431.1 129.3,432.0 130.9,432.9 132.6,433.7 134.3,434.5 136.0,435.2 137.8,436.0 139.5,436.7 141.2,437.4 143.0,438.1 144.7,438.8 146.5,439.4 148.3,440.1 150.0,440.8" fill="none" stroke="#111" stroke-width="1" />
<polyline points="287.2,317.5 287.1,319.6 287.0,321.8 286.8,323.9 286.7,326.1 286.6,328.2 286.5,330.3 286.3,332.5 286.1,334.6 285.9,336.8 285.7,338.9 285.4,341.0 285.1,343.1 284.7,345.2 284.3,347.4 283.9,349.5 283.4,351.6 283.0,353.6 282.4,355.7 281.9,357.8 281.3,359.9 280.6,361.9 279.9,363.9 279.2,365.9 278.4,367.9 277.6,369.9 276.8,371.9 275.9,373.9 275.0,375.8 274.0,377.7 273.1,379.6 272.0,381.5 271.0,383.4 269.9,385.3 268.8,387.1 267.7,388.9 266.5,390.7 265.2,392.4 263.9,394.1 262.6,395.9 261.3,397.5 260.0,399.2 258.6,400.9 257.3,402.5 255.9,404.2 254.5,405.8 253.1,407.5 251.7,409.1 250.4,410.7 249.0,412.4" fill="none" stroke="#111" stroke-width="1" />
<polyline points="239.9,237.5 241.2,238.6 242.5,239.7 243.8,240.7 245.0,241.8 246.3,242.8 247.6,243.9 248.9,245.0 250.2,246.1 251.4,247.2 252.7,248.3 253.9,249.4 255.1,250.6 256.3,251.7 257.5,252.9 258.6,254.2 259.7,255.4 260.8,256.7 261.8,258.0 262.8,259.4 263.8,260.7 264.8,262.1 265.8,263.4 266.8,264.8 267.7,266.1 268.7,267.5 269.6,268.9 270.6,270.3 271.5,271.6 272.5,273.0" fill="none" stroke="#111" stroke-width="0.8" />
<polygon points="101.1,312.0 101.7,311.1 102.3,310.2 103.0,309.2 103.8,308.2 104.5,307.2 105.3,306.1 106.1,305.0 106.9,303.9 107.7,302.9 108.6,301.8 109.4,300.8 110.2,299.8 111.0,298.8 111.8,297.9 112.7,296.9 113.5,295.9 114.4,295.0 115.2,294.0 116.1,293.1 117.0,292.1 117.8,291.2 118.7,290.3 119.5,289.5 120.4,288.6 121.3,287.8 122.1,286.9 123.0,286.1 123.8,285.4 124.7,284.6 125.5,283.8 126.4,283.1 127.2,282.4 128.1,281.6 128.9,280.9 129.8,280.2 130.6,279.5 131.4,278.8 132.3,278.1 133.1,277.4 134.0,276.8 134.8,276.1 135.6,275.5 136.5,274.8 137.3,274.2 138.2,273.6 139.0,273.0 139.9,272.4 140.7,271.8 141.5,271.2 142.4,270.7 143.2,270.1 144.1,269.6 144.9,269.1 145.8,268.6 146.6,268.1 147.5,267.6 148.3,267.1 149.2,266.7 150.0,266.2 150.9,265.8 151.8,265.4 152.6,265.0 153.5,264.6 154.3,264.2 155.2,263.9 156.0,263.5 156.9,263.2 157.7,262.9 158.6,262.6 159.4,262.3 160.3,262.0 161.1,261.7 161.9,261.4 162.8,261.2 163.6,260.9 164.5,260.7 165.3,260.4 166.2,260.2 167.0,260.0 167.8,259.8 168.7,259.6 169.5,259.4 170.4,259.3 171.2,259.1 172.1,258.9 172.9,258.8 173.8,258.7 174.7,258.6 175.5,258.5 176.4,258.4 177.3,258.3 178.2,258.2 179.0,258.1 179.8,258.0 180.6,258.0 181.4,257.9 182.2,257.8 182.9,257.8 183.7,257.7 184.4,257.7 185.1,257.6 185.8,257.6 186.5,257.5 187.2,257.5 187.8,257.5 188.4,257.5 189.0,257.6 189.5,257.6 190.0,257.7 190.4,257.7 190.8,257.8 191.2,257.9 191.5,258.1 191.8,258.2 192.1,258.3 192.4,258.5 192.7,258.7 193.0,258.8 193.3,259.0 193.6,259.2 193.9,259.4 194.3,259.6 194.6,259.9 195.0,260.1 195.3,260.4 195.6,260.7 196.0,260.9 196.3,261.2 196.6,261.5 196.9,261.8 197.2,262.0 197.5,262.3 197.8,262.5 198.0,262.8 198.2,263.0 198.5,263.2 198.7,263.4 198.9,263.6 199.1,263.8 199.3,264.0 199.5,264.3 199.8,264.6 200.1,264.9 200.4,265.2 200.7,265.6 201.1,266.0 201.5,266.5 201.9,266.9 202.4,267.4 202.8,268.0 203.3,268.5 203.7,269.0 204.2,269.5 204.6,270.0 205.1,270.4 205.5,270.8 205.9,271.1 206.3,271.4 206.7,271.7 207.0,271.9 207.4,272.1 207.7,272.3 208.1,272.5 208.5,272.8 209.0,273.1 209.5,273.4 210.0,273.9 210.6,274.4 211.3,275.0 212.0,275.7 212.8,276.5 213.7,277.4 214.6,278.2 215.5,279.2 216.4,280.1 217.3,281.0 218.2,282.0 219.1,282.9 219.9,283.8 220.7,284.6 221.5,285.4 222.2,286.2 223.0,287.0 223.7,287.8 224.4,288.6 225.1,289.4 225.8,290.2 226.5,290.9 227.1,291.7 227.7,292.4 228.3,293.1 228.9,293.7 229.4,294.3 229.9,294.9 230.4,295.4 230.9,295.9 231.3,296.4 231.7,296.9 232.1,297.3 232.5,297.8 232.9,298.3 233.2,298.8 233.6,299.3 233.9,299.8 234.2,300.4 234.5,300.9 234.8,301.5 235.1,302.1 235.4,302.7 235.6,303.3 235.9,303.9 236.1,304.5 236.4,305.1 236.6,305.7 236.8,306.3 237.0,306.9 237.2,307.4 237.4,307.9 237.6,308.4 237.8,308.9 238.0,309.3 238.2,309.8 238.4,310.2 238.5,310.8 238.6,311.4 238.8,312.0 238.8,312.8 238.9,313.7 238.9,314.7 238.9,315.8 238.9,317.1 238.9,318.4 238.8,319.8 238.8,321.2 238.7,322.6 238.6,324.1 238.5,325.5 238.4,326.9 238.2,328.3 238.1,329.6 238.0,330.9 237.8,332.1 237.6,333.3 237.5,334.6 237.3,335.8 237.1,337.0 236.9,338.2 236.6,339.4 236.4,340.5 236.1,341.7 235.8,342.9 235.5,344.0 235.2,345.1 234.8,346.3 234.4,347.4 234.1,348.5 233.6,349.6 233.2,350.7 232.8,351.7 232.3,352.8 231.8,353.9 231.3,354.9 230.8,356.0 230.3,357.0 229.7,358.0 229.2,359.0 228.5,360.1 227.9,361.0 227.3,362.0 226.6,363.0 225.9,364.0 225.2,365.0 224.6,365.9 223.9,366.9 223.2,367.8 222.5,368.8 221.8,369.8 221.1,370.7 220.5,371.7 219.8,372.7 219.1,373.7 218.4,374.6 217.7,375.6 217.0,376.5 216.2,377.4 215.5,378.3 214.8,379.1 214.0,379.9 213.2,380.6 212.5,381.3 211.7,382.0 211.0,382.6 210.2,383.2 209.4,383.8 208.6,384.4 207.8,384.9 206.9,385.5 206.0,386.0 205.1,386.6 204.2,387.1 203.2,387.6 202.2,388.2 201.2,388.7 200.1,389.3 199.0,389.8 197.8,390.3 196.7,390.8 195.6,391.2 194.4,391.7 193.3,392.1 192.2,392.5 191.1,392.9 190.0,393.2 188.9,393.5 187.7,393.8 186.5,394.1 185.4,394.3 184.2,394.5 183.1,394.7 182.0,394.9 180.9,395.1 179.9,395.3 179.0,395.4 178.1,395.6 177.3,395.8 176.6,395.9 176.0,396.1 175.4,396.2 174.9,396.3 174.4,396.5 173.9,396.6 173.4,396.7 172.9,396.8 172.4,396.8 171.9,396.9 171.3,396.9 170.7,396.9 170.0,396.9 169.3,396.9 168.5,396.8 167.8,396.8 167.0,396.7 166.3,396.6 165.6,396.5 164.9,396.4 164.3,396.3 163.7,396.2 163.2,396.1 162.8,396.0 162.4,395.9 162.2,395.8 162.0,395.7 161.8,395.6 161.7,395.5 161.5,395.4 161.3,395.2 161.0,395.1 160.7,394.8 160.3,394.6 159.7,394.3 159.0,394.0 158.2,393.6 157.4,393.2 156.4,392.7 155.4,392.3 154.4,391.8 153.3,391.3 152.3,390.8 151.2,390.2 150.1,389.6 149.1,389.1 148.1,388.5 147.1,387.9 146.2,387.3 145.2,386.7 144.2,386.0 143.3,385.3 142.3,384.7 141.3,384.0 140.4,383.3 139.4,382.6 138.4,381.8 137.5,381.1 136.5,380.4 135.5,379.7 134.6,378.9 133.6,378.2 132.6,377.4 131.6,376.7 130.7,375.9 129.7,375.1 128.7,374.3 127.7,373.5 126.7,372.7 125.8,371.9 124.8,371.1 123.8,370.3 122.9,369.5 121.9,368.6 120.9,367.8 120.0,367.0 119.0,366.1 118.1,365.3 117.1,364.4 116.1,363.5 115.2,362.6 114.2,361.7 113.2,360.7 112.2,359.7 111.1,358.6 110.0,357.5 108.9,356.4 107.7,355.2 106.6,354.1 105.5,352.9 104.4,351.8 103.5,350.7 102.5,349.7 101.7,348.8 101.0,347.9 100.4,347.1 99.9,346.4 99.5,345.8 99.1,345.2 98.8,344.7 98.6,344.2 98.4,343.7 98.2,343.2 98.0,342.7 97.9,342.1 97.7,341.5 97.5,340.9 97.3,340.2 97.1,339.5 96.9,338.8 96.7,338.1 96.5,337.3 96.4,336.5 96.3,335.8 96.1,335.0 96.0,334.1 95.9,333.3 95.9,332.5 95.8,331.6 95.8,330.7 95.7,329.8 95.7,328.8 95.7,327.8 95.7,326.7 95.7,325.7 95.7,324.7 95.8,323.7 95.9,322.7 96.0,321.8 96.2,320.8 96.4,320.0 96.6,319.2 96.9,318.5 97.2,317.8 97.5,317.2 97.8,316.6 98.2,316.0 98.6,315.4 99.1,314.8 99.5,314.2 100.0,313.5 100.5,312.8" fill="none" stroke="#111" stroke-width="1"/>
<polyline points="95.3,300.3 96.5,298.6 97.7,297.0 98.9,295.4 100.1,293.7 101.3,292.1 102.6,290.5 103.9,289.0 105.2,287.4 106.5,285.8 107.9,284.3 109.2,282.8 110.6,281.3 112.0,279.8 113.4,278.3 114.9,276.9 116.3,275.5 117.9,274.2 119.4,272.8 121.0,271.5 122.5,270.2 124.1,269.0 125.7,267.7 127.4,266.5 129.0,265.3 130.7,264.1 132.3,262.9 134.0,261.8 135.7,260.7 137.4,259.6 139.2,258.5 140.9,257.5 142.7,256.6 144.5,255.6 146.3,254.7 148.2,253.8 150.1,253.0 151.9,252.3 153.8,251.5 155.8,250.9 157.7,250.2 159.6,249.6 161.6,249.1 163.6,248.5 165.6,248.1 167.5,247.6 169.5,247.3 171.6,246.9 173.6,246.7 175.6,246.5 177.6,246.3 179.7,246.2 181.7,246.0 183.7,245.9 185.8,245.8 187.8,245.7" fill="none" stroke="#fff" stroke-width="1.1" stroke-dasharray="9 9"/>
<polyline points="93.5,356.9 94.5,358.0 95.4,359.1 96.4,360.2 97.4,361.3 98.4,362.4 99.4,363.5 100.4,364.5 101.4,365.6 102.4,366.7 103.4,367.8 104.5,368.8 105.5,369.9 106.6,370.9 107.6,371.9 108.7,372.9 109.8,374.0 110.9,375.0 111.9,376.0 113.0,377.0 114.1,377.9 115.3,378.9 116.4,379.9 117.5,380.9 118.6,381.8 119.7,382.8 120.9,383.7 122.0,384.6 123.2,385.6 124.3,386.5 125.5,387.4 126.7,388.2 127.9,389.1 129.1,390.0 130.3,390.8 131.5,391.7 132.7,392.5 133.9,393.3 135.2,394.2 136.4,395.0 137.6,395.8 138.8,396.6 140.1,397.4 141.3,398.2 142.6,398.9 143.9,399.7 145.2,400.4 146.5,401.1 147.8,401.7 149.2,402.3 150.5,403.0 151.9,403.6 153.2,404.2 154.6,404.8 155.9,405.4 157.2,406.0 158.6,406.6" fill="none" stroke="#fff" stroke-width="1.1" stroke-dasharray="8 11"/>
<polyline points="86.2,293.1 87.5,291.2 88.8,289.4 90.2,287.6 91.5,285.8 92.8,284.0 94.2,282.3 95.6,280.5 97.0,278.8 98.4,277.0 99.8,275.3 101.3,273.6 102.7,272.0 104.2,270.3 105.8,268.7 107.4,267.1 109.0,265.6 110.7,264.1 112.4,262.7 114.1,261.2 115.9,259.9 117.6,258.5 119.4,257.2 121.2,255.9 123.1,254.6 124.9,253.3 126.8,252.1 128.6,250.9 130.5,249.7 132.4,248.5 134.4,247.4 136.3,246.3 138.3,245.3 140.3,244.3 142.3,243.3 144.4,242.4 146.4,241.6 148.5,240.7 150.6,240.0 152.7,239.2 154.8,238.6 157.0,237.9 159.1,237.3 161.3,236.8 163.5,236.3 165.7,235.8 167.9,235.4 170.1,235.1 172.3,234.8 174.5,234.6 176.8,234.5 179.0,234.3 181.2,234.2 183.5,234.1 185.7,234.0 187.9,233.9" fill="none" stroke="#fff" stroke-width="1.1" stroke-dasharray="9 9"/>
<polyline points="84.1,363.9 85.2,365.1 86.2,366.3 87.3,367.5 88.3,368.7 89.4,370.0 90.5,371.2 91.5,372.4 92.6,373.6 93.7,374.8 94.8,375.9 95.9,377.1 97.0,378.3 98.2,379.4 99.3,380.5 100.4,381.7 101.6,382.8 102.8,383.9 103.9,385.0 105.1,386.1 106.3,387.2 107.5,388.3 108.7,389.3 109.9,390.4 111.1,391.5 112.4,392.5 113.6,393.5 114.8,394.6 116.1,395.6 117.4,396.5 118.7,397.5 120.0,398.4 121.3,399.4 122.6,400.3 124.0,401.1 125.3,402.0 126.7,402.9 128.0,403.8 129.4,404.7 130.7,405.5 132.1,406.4 133.4,407.2 134.8,408.1 136.2,408.9 137.6,409.7 139.0,410.5 140.4,411.2 141.9,411.9 143.3,412.6 144.8,413.3 146.3,414.0 147.7,414.6 149.2,415.2 150.7,415.9 152.2,416.5 153.7,417.2 155.1,417.8" fill="none" stroke="#fff" stroke-width="1.1" stroke-dasharray="8 11"/>
<polyline points="77.2,285.8 78.6,283.8 80.0,281.9 81.4,279.9 82.9,277.9 84.3,276.0 85.8,274.0 87.2,272.1 88.7,270.2 90.2,268.3 91.8,266.4 93.3,264.5 94.9,262.6 96.5,260.8 98.2,259.1 99.9,257.3 101.7,255.7 103.5,254.0 105.3,252.5 107.2,250.9 109.2,249.5 111.1,248.0 113.1,246.6 115.1,245.2 117.1,243.9 119.2,242.6 121.2,241.2 123.3,239.9 125.4,238.7 127.5,237.5 129.6,236.3 131.7,235.1 133.9,234.0 136.1,233.0 138.3,232.0 140.6,231.0 142.8,230.1 145.1,229.2 147.4,228.4 149.7,227.6 152.0,226.9 154.3,226.2 156.7,225.6 159.0,225.0 161.4,224.5 163.8,224.0 166.2,223.6 168.6,223.3 171.0,223.0 173.5,222.8 175.9,222.6 178.3,222.5 180.7,222.4 183.2,222.3 185.6,222.2 188.0,222.2" fill="none" stroke="#fff" stroke-width="1.1" stroke-dasharray="9 9"/>
<polyline points="74.8,370.9 75.9,372.2 77.0,373.6 78.1,374.9 79.2,376.2 80.4,377.6 81.5,378.9 82.7,380.2 83.8,381.5 85.0,382.8 86.1,384.1 87.3,385.4 88.5,386.6 89.7,387.9 91.0,389.1 92.2,390.4 93.4,391.6 94.7,392.8 95.9,394.0 97.2,395.2 98.5,396.4 99.8,397.6 101.0,398.8 102.3,399.9 103.7,401.1 105.0,402.2 106.3,403.4 107.7,404.5 109.0,405.5 110.4,406.6 111.8,407.6 113.3,408.6 114.7,409.6 116.2,410.5 117.6,411.5 119.1,412.4 120.6,413.3 122.1,414.2 123.6,415.2 125.0,416.1 126.5,417.0 128.0,417.8 129.6,418.7 131.1,419.6 132.6,420.4 134.1,421.2 135.7,422.0 137.3,422.8 138.8,423.6 140.4,424.3 142.0,425.0 143.6,425.7 145.2,426.3 146.8,427.0 148.5,427.6 150.1,428.3 151.7,429.0" fill="none" stroke="#fff" stroke-width="1.1" stroke-dasharray="8 11"/>
<polyline points="225.3,272.0 226.3,273.0 227.2,273.9 228.1,274.9 229.0,275.8 230.0,276.8 230.9,277.8 231.8,278.7 232.7,279.7 233.5,280.7 234.4,281.7 235.3,282.7 236.1,283.7 237.0,284.8 237.8,285.8 238.7,286.8 239.5,287.8 240.3,288.9 241.1,289.9 241.9,291.0 242.7,292.1 243.6,293.1" fill="none" stroke="#fff" stroke-width="1" stroke-dasharray="7 9"/>
<polyline points="225.2,255.6 226.2,256.5 227.3,257.5 228.3,258.5 229.4,259.5 230.4,260.4 231.5,261.4 232.6,262.4 233.6,263.4 234.6,264.4 235.7,265.4 236.7,266.4 237.7,267.4 238.7,268.4 239.7,269.5 240.7,270.5 241.7,271.6 242.6,272.7 243.5,273.8 244.4,274.9 245.4,276.1 246.3,277.2 247.1,278.3 248.0,279.5 248.9,280.6 249.8,281.8 250.6,282.9 251.5,284.1 252.3,285.2 253.2,286.4" fill="none" stroke="#fff" stroke-width="1.1" />
<polyline points="232.5,246.5 233.7,247.6 234.9,248.6 236.0,249.6 237.2,250.6 238.4,251.6 239.6,252.7 240.7,253.7 241.9,254.7 243.0,255.8 244.2,256.8 245.3,257.9 246.4,259.0 247.5,260.1 248.6,261.2 249.7,262.4 250.7,263.5 251.7,264.7 252.7,265.9 253.6,267.2 254.6,268.4 255.5,269.6 256.5,270.9 257.4,272.1 258.3,273.4 259.2,274.6 260.1,275.9 261.0,277.2 261.9,278.4 262.9,279.7" fill="none" stroke="#fff" stroke-width="1.1" />
<polyline points="250.4,328.0 250.2,329.6 250.1,331.2 249.9,332.9 249.7,334.5 249.4,336.1 249.2,337.8 248.9,339.4 248.6,341.0 248.3,342.6 247.9,344.2 247.5,345.8 247.1,347.4 246.6,349.0 246.1,350.6 245.6,352.1 245.0,353.7 244.4,355.2 243.8,356.7 243.1,358.2 242.5,359.7 241.7,361.2 241.0,362.7 240.2,364.1 239.4,365.5 238.5,366.9 237.6,368.3 236.7,369.7 235.8,371.1 234.8,372.4 233.9,373.7 232.9,375.1 231.9,376.4 230.9,377.7 229.9,379.0 228.9,380.3 227.9,381.6 226.9,382.9 225.8,384.2 224.8,385.5 223.8,386.7 222.8,388.0" fill="none" stroke="#fff" stroke-width="1" stroke-dasharray="8 9"/>
<polyline points="263.1,315.7 263.0,317.5 262.9,319.3 262.8,321.1 262.7,322.9 262.6,324.8 262.5,326.6 262.4,328.4 262.3,330.2 262.1,332.0 261.9,333.8 261.7,335.6 261.5,337.4 261.2,339.2 260.9,341.0 260.6,342.7 260.2,344.5 259.8,346.3 259.4,348.1 259.0,349.8 258.5,351.6 258.0,353.3 257.4,355.0 256.8,356.7 256.2,358.4 255.5,360.1 254.8,361.8 254.1,363.4 253.3,365.1 252.5,366.7 251.7,368.3 250.8,369.9 249.9,371.5 249.0,373.0 248.0,374.6 247.0,376.1 246.0,377.6 245.0,379.1 243.9,380.5 242.8,382.0 241.7,383.4 240.6,384.9 239.5,386.3 238.4,387.7 237.2,389.1 236.1,390.5 234.9,391.9 233.8,393.3 232.6,394.7 231.5,396.1" fill="none" stroke="#fff" stroke-width="1.1" />
<polyline points="274.9,316.6 274.8,318.6 274.7,320.5 274.6,322.5 274.5,324.5 274.4,326.4 274.3,328.4 274.1,330.4 274.0,332.4 273.8,334.3 273.6,336.3 273.3,338.2 273.0,340.2 272.7,342.1 272.4,344.1 272.0,346.0 271.6,348.0 271.2,349.9 270.7,351.8 270.2,353.7 269.7,355.6 269.1,357.5 268.4,359.4 267.8,361.2 267.1,363.1 266.3,364.9 265.6,366.7 264.8,368.5 263.9,370.3 263.1,372.1 262.2,373.9 261.2,375.6 260.2,377.3 259.2,379.0 258.2,380.7 257.1,382.4 256.0,384.0 254.9,385.6 253.7,387.2 252.5,388.8 251.3,390.3 250.1,391.9 248.9,393.4 247.6,395.0 246.4,396.5 245.1,398.0 243.8,399.5 242.6,401.1 241.3,402.6 240.1,404.1" fill="none" stroke="#fff" stroke-width="1.1" />
<polyline points="285.1,278.8 286.5,276.6 287.9,274.5 289.3,272.3 290.7,270.1 292.2,267.9 293.6,265.8 295.1,263.6 296.5,261.5 298.0,259.4 299.5,257.3 301.1,255.2 302.6,253.1 304.2,251.0 305.7,248.9 307.3,246.9 308.8,244.8 310.4,242.8 312.0,240.7 313.7,238.7 315.3,236.7 316.9,234.7 318.6,232.7 320.3,230.8 322.1,228.8 323.8,226.9 325.6,225.0 327.3,223.1 329.1,221.3 331.0,219.4 332.8,217.6 334.7,215.8 336.6,214.1 338.5,212.3 340.5,210.6 342.5,208.9 344.5,207.3 346.5,205.7 348.5,204.1 350.6,202.6 352.7,201.0 354.8,199.5 357.0,198.1 359.2,196.7 361.4,195.4 363.7,194.2 366.0,192.9 368.2,191.7 370.5,190.4 372.8,189.2" fill="none" stroke="#fff" stroke-width="1.1" />
<polyline points="292.8,289.4 294.0,287.0 295.2,284.7 296.5,282.3 297.8,280.0 299.2,277.7 300.6,275.5 302.0,273.3 303.5,271.1 305.1,268.9 306.6,266.7 308.2,264.5 309.7,262.4 311.3,260.2 312.9,258.1 314.5,256.0 316.2,253.9 317.8,251.8 319.4,249.7 321.1,247.6 322.8,245.5 324.5,243.5 326.2,241.4 327.9,239.4 329.7,237.4 331.5,235.5 333.3,233.5 335.2,231.6 337.0,229.7 338.9,227.8 340.8,226.0 342.8,224.1 344.7,222.3 346.7,220.6 348.7,218.8 350.8,217.1 352.8,215.4 354.9,213.8 357.1,212.1 359.2,210.6 361.4,209.0 363.6,207.5 365.8,206.1 368.1,204.8 370.5,203.5 372.8,202.3 375.2,201.1 377.6,199.9 380.0,198.8 382.4,197.6" fill="none" stroke="#fff" stroke-width="1.1" stroke-dasharray="9 9"/>
<polyline points="176.3,459.8 180.0,480.0 184.3,512.0 189.2,540.0 204.3,625.0 214.0,680.0" fill="none" stroke="#fff" stroke-width="1.1" stroke-dasharray="10 9" stroke-dashoffset="4"/>
<polyline points="187.8,458.3 192.0,480.0 196.5,512.0 201.8,540.0 216.4,625.0 226.0,680.0" fill="none" stroke="#fff" stroke-width="1.1" stroke-dasharray="10 9" stroke-dashoffset="4"/>
<polyline points="231.5,448.2 239.5,512.0 245.5,540.0 258.7,618.0 268.0,680.0" fill="none" stroke="#fff" stroke-width="1.1" />
<polyline points="242.8,446.4 251.5,512.0 257.2,540.0 271.0,617.0 280.5,680.0" fill="none" stroke="#fff" stroke-width="1.1" />
<polyline points="241.7,202.5 383.0,155.8" fill="none" stroke="#fff" stroke-width="1.2" stroke-dasharray="11 8"/>
<polyline points="245.0,213.3 340.0,183.3" fill="none" stroke="#fff" stroke-width="1.2" stroke-dasharray="11 8"/>
<polyline points="-3.0,316.9 -1.8,316.7 -0.4,316.4 1.3,316.0 3.2,315.7 5.3,315.3 7.5,314.8 9.8,314.4 12.1,313.9 14.4,313.4 16.6,312.9 18.7,312.4 20.7,311.9 22.6,311.4 24.6,310.8 26.7,310.1 28.8,309.5 30.8,308.8 32.8,308.1 34.8,307.5 36.6,306.9 38.2,306.3 39.7,305.8 41.0,305.3 42.0,305.0" fill="none" stroke="#fff" stroke-width="1.1" />
<polyline points="-3.0,328.4 -1.7,328.1 0.0,327.8 2.0,327.4 4.2,327.0 6.6,326.6 9.2,326.1 11.8,325.6 14.4,325.1 17.0,324.5 19.5,324.0 21.9,323.5 24.0,323.0 26.0,322.5 28.1,321.9 30.2,321.4 32.2,320.8 34.2,320.2 36.2,319.6 38.0,319.0 39.8,318.4 41.4,317.9 42.8,317.5 44.0,317.1 45.0,316.8" fill="none" stroke="#fff" stroke-width="1.1" stroke-dasharray="9 9"/>
<polyline points="-2.0,356.5 36.0,359.5" fill="none" stroke="#fff" stroke-width="1.1" stroke-dasharray="9 9"/>
<polygon points="223.1,200.2 229.6,201.3 225.4,206.6" fill="none" stroke="#fff" stroke-width="1"/>
<polygon points="231.5,209.5 237.9,211.5 233.7,216.4" fill="none" stroke="#fff" stroke-width="1"/>
<polygon points="239.5,219.5 246.2,220.6 242.4,226.1" fill="none" stroke="#fff" stroke-width="1"/>
<polygon transform="translate(236.5,198.3) rotate(164.6)" points="-5.8,-1.3 1.2,-1.3 1.2,-3.3 5.8,0.0 1.2,3.3 1.2,1.3 -5.8,1.3" fill="#fff"/>
<polygon transform="translate(245.2,208.4) rotate(164.6)" points="-5.8,-1.3 1.2,-1.3 1.2,-3.3 5.8,0.0 1.2,3.3 1.2,1.3 -5.8,1.3" fill="#fff"/>
<polygon transform="translate(253.5,218.3) rotate(164.6)" points="-5.8,-1.3 1.2,-1.3 1.2,-3.3 5.8,0.0 1.2,3.3 1.2,1.3 -5.8,1.3" fill="#fff"/>
<polyline points="222.4,210.0 232.2,206.8" fill="none" stroke="#fff" stroke-width="1" />
<polyline points="229.2,220.6 236.7,218.3" fill="none" stroke="#fff" stroke-width="1" />
<polyline points="229.0,213.5 228.3,213.9 227.3,214.5 226.2,215.1 224.9,215.8 223.6,216.6 222.1,217.5 220.7,218.3 219.2,219.2 217.8,220.0 216.4,220.8 215.1,221.6 214.0,222.3 213.0,223.0 212.0,223.6 211.1,224.2 210.2,224.8 209.4,225.4 208.5,226.0 207.7,226.6 207.0,227.2 206.2,227.7 205.5,228.3 204.7,228.8 204.0,229.3 203.3,229.8 202.5,230.3 201.8,230.9 201.0,231.4 200.3,231.9 199.6,232.4 199.0,232.9 198.4,233.3 197.8,233.7 197.3,234.0 196.9,234.3 196.5,234.6" fill="none" stroke="#ff0000" stroke-width="6.4" stroke-linecap="butt"/><polygon points="191.2,234.8 196.2,226.8 197.3,239.7" fill="#ff0000" />
<polyline points="86.5,298.0 86.2,298.7 85.7,299.5 85.2,300.4 84.6,301.4 83.9,302.6 83.2,303.8 82.6,305.1 81.9,306.4 81.2,307.8 80.6,309.2 80.0,310.6 79.5,312.0 79.0,313.4 78.6,314.9 78.2,316.5 77.7,318.1 77.3,319.8 77.0,321.4 76.6,323.1 76.3,324.8 76.0,326.4 75.8,328.0 75.6,329.5 75.5,331.0 75.4,332.4 75.5,333.8 75.5,335.2 75.6,336.5 75.8,337.8 76.0,339.1 76.2,340.4 76.4,341.6 76.6,342.8 76.8,343.9 77.0,345.0 77.2,346.0 77.4,347.0 77.5,348.0 77.7,348.9 77.9,349.8 78.1,350.6 78.3,351.4 78.5,352.2 78.7,352.9 78.8,353.5 79.0,354.1 79.1,354.6 79.2,355.0" fill="none" stroke="#ff0000" stroke-width="7.6" stroke-linecap="butt"/><polygon points="82.6,360.6 72.6,356.6 85.4,352.4" fill="#ff0000" />
<polyline points="152.5,424.0 153.2,424.3 154.1,424.6 155.2,425.1 156.5,425.5 157.8,426.0 159.2,426.5 160.6,427.1 162.0,427.7 163.4,428.4 164.7,429.1 165.9,429.8 167.0,430.5 168.0,431.3 168.9,432.1 169.8,433.0 170.6,434.0 171.4,435.0 172.2,436.0 172.9,437.0 173.6,438.0 174.3,439.0 174.9,440.1 175.5,441.0 176.0,442.0 176.5,443.0 177.0,444.0 177.4,445.0 177.7,446.1 178.1,447.2 178.4,448.2 178.6,449.2 178.9,450.2 179.1,451.0 179.3,451.8 179.4,452.5 179.6,453.0" fill="none" stroke="#ff0000" stroke-width="6" stroke-linecap="butt"/><polygon points="181.6,459.0 173.6,453.6 187.0,451.0" fill="#ff0000" />
<polyline points="69.4,291.7 68.9,292.2 68.2,292.8 67.5,293.6 66.6,294.5 65.7,295.4 64.8,296.4 63.7,297.4 62.7,298.4 61.7,299.3 60.6,300.2 59.6,301.0 58.7,301.7 57.7,302.3 56.7,302.8 55.7,303.4 54.6,303.8 53.5,304.3 52.4,304.7 51.4,305.0 50.4,305.4 49.5,305.7 48.7,305.9 48.0,306.2 47.5,306.4" fill="none" stroke="#111" stroke-width="1.1" /><polyline points="74.1,294.4 73.6,294.9 73.0,295.6 72.4,296.4 71.6,297.3 70.8,298.3 69.9,299.3 69.0,300.3 68.0,301.4 67.0,302.4 66.0,303.4 65.0,304.2 64.0,305.0 62.9,305.7 61.8,306.4 60.5,307.0 59.2,307.7 57.9,308.3 56.5,308.9 55.2,309.4 54.0,309.9 52.8,310.3 51.8,310.8 51.0,311.1 50.3,311.4" fill="none" stroke="#111" stroke-width="1.1" /><polyline points="47.5,306.4 46.0,303.7 44.0,309.0 51.6,314.4 50.3,311.4" fill="none" stroke="#111" stroke-width="1.1" />
<polyline points="160.8,405.0 161.6,405.2 162.7,405.4 163.9,405.7 165.3,406.1 166.8,406.4 168.3,406.8 170.0,407.2 171.6,407.5 173.3,407.8 174.9,408.1 176.5,408.3 178.0,408.5 179.4,408.6 180.9,408.7 182.3,408.7 183.7,408.7 185.1,408.6 186.6,408.6 188.0,408.5 189.4,408.4 190.8,408.2 192.2,408.1 193.6,407.9 195.0,407.7 196.4,407.5 197.8,407.2 199.2,406.9 200.7,406.6 202.1,406.2 203.5,405.9 204.9,405.5 206.3,405.1 207.6,404.7 208.8,404.3 209.9,403.9 211.0,403.5 212.0,403.1 212.9,402.7 213.9,402.2 214.7,401.8 215.5,401.3 216.2,400.8 216.9,400.4 217.6,400.0 218.1,399.6 218.7,399.2 219.1,398.9 219.5,398.7" fill="none" stroke="#111" stroke-width="1.1" /><polyline points="159.2,411.7 160.0,411.8 160.9,412.0 162.1,412.2 163.4,412.5 164.8,412.7 166.2,413.0 167.7,413.3 169.3,413.6 170.8,413.8 172.3,414.0 173.7,414.2 175.0,414.3 176.2,414.4 177.4,414.4 178.6,414.5 179.7,414.5 180.9,414.5 182.0,414.5 183.1,414.4 184.3,414.4 185.4,414.3 186.6,414.2 187.8,414.1 189.0,414.0 190.3,413.9 191.6,413.7 193.0,413.6 194.3,413.4 195.7,413.2 197.1,413.0 198.5,412.8 199.9,412.6 201.2,412.3 202.5,412.1 203.8,411.8 205.0,411.5 206.1,411.2 207.3,410.9 208.3,410.5 209.4,410.2 210.4,409.8 211.4,409.4 212.4,409.0 213.3,408.6 214.3,408.2 215.2,407.8 216.1,407.4 217.0,407.0 217.9,406.6 218.8,406.1 219.8,405.6 220.7,405.1 221.6,404.6 222.5,404.1 223.3,403.6 224.1,403.2 224.9,402.8 225.5,402.4 226.0,402.1 226.5,401.8" fill="none" stroke="#111" stroke-width="1.1" /><polyline points="219.5,398.7 217.2,396.2 230.0,397.2 228.6,405.4 226.5,401.8" fill="none" stroke="#111" stroke-width="1.1" />
<polyline points="253.5,314.4 253.5,313.8 253.4,313.1 253.4,312.3 253.3,311.4 253.3,310.4 253.2,309.3 253.2,308.2 253.1,307.1 253.1,306.0 253.0,304.9 253.0,303.9 253.0,303.0 253.0,302.1 253.0,301.2 253.1,300.2 253.1,299.3 253.2,298.4 253.3,297.5 253.3,296.6 253.4,295.8 253.5,295.1 253.5,294.4 253.6,293.9 253.6,293.4" fill="none" stroke="#111" stroke-width="1.1" /><polyline points="259.1,314.4 259.1,313.7 259.0,312.8 259.0,311.7 259.0,310.5 258.9,309.2 258.9,307.8 258.9,306.4 258.8,305.0 258.8,303.6 258.7,302.3 258.7,301.1 258.6,300.0 258.5,299.0 258.5,298.0 258.4,297.1 258.3,296.1 258.2,295.3 258.2,294.4 258.1,293.6 258.0,292.9 258.0,292.2 257.9,291.6 257.8,291.0 257.8,290.6" fill="none" stroke="#111" stroke-width="1.1" /><polyline points="253.6,293.4 249.5,293.6 255.2,287.4 260.6,290.0 257.8,290.6" fill="none" stroke="#111" stroke-width="1.1" />
<polyline points="253.5,314.4 259.1,314.4" fill="none" stroke="#111" stroke-width="0.9" />
<polyline points="271.3,315.0 271.4,314.4 271.6,313.6 271.7,312.7 271.9,311.7 272.1,310.6 272.3,309.4 272.6,308.1 272.9,306.9 273.2,305.6 273.6,304.4 274.0,303.2 274.5,302.0 275.1,300.8 275.8,299.6 276.6,298.2 277.4,296.9 278.3,295.5 279.2,294.2 280.1,292.9 281.0,291.7 281.7,290.5 282.5,289.5 283.0,288.7 283.5,288.0" fill="none" stroke="#111" stroke-width="1.1" /><polyline points="278.3,315.0 278.4,314.5 278.5,313.8 278.7,313.1 278.8,312.2 279.0,311.3 279.2,310.3 279.4,309.2 279.6,308.2 279.9,307.1 280.2,306.0 280.6,305.0 281.0,304.0 281.5,303.0 282.1,301.9 282.7,300.7 283.4,299.5 284.2,298.3 284.9,297.1 285.7,295.9 286.4,294.8 287.0,293.8 287.6,292.9 288.1,292.1 288.5,291.5" fill="none" stroke="#111" stroke-width="1.1" /><polyline points="283.5,288.0 281.0,285.0 290.2,283.3 291.4,291.4 288.5,291.5" fill="none" stroke="#111" stroke-width="1.1" />
<polyline points="271.3,315.0 278.3,315.0" fill="none" stroke="#111" stroke-width="0.9" />
<polyline points="192.0,240.0 192.6,240.2 193.4,240.4 194.4,240.7 195.4,241.0 196.6,241.3 197.8,241.6 199.1,242.0 200.3,242.4 201.6,242.8 202.8,243.2 203.9,243.6 205.0,244.0 206.0,244.4 207.0,244.9 208.0,245.4 208.9,245.9 209.9,246.4 210.8,246.9 211.7,247.4 212.6,247.9 213.5,248.5 214.4,249.0 215.2,249.5 216.0,250.0 216.8,250.5 217.6,251.1 218.4,251.6 219.2,252.2 220.0,252.8 220.7,253.4 221.4,253.9 222.0,254.4 222.6,254.9 223.2,255.3 223.6,255.7 224.0,256.0" fill="none" stroke="#111" stroke-width="0.9" />
<polyline points="197.0,234.0 197.5,234.2 198.2,234.4 199.0,234.6 199.9,234.9 200.8,235.2 201.8,235.6 202.9,235.9 203.9,236.3 205.0,236.7 206.0,237.1 207.0,237.5 208.0,238.0 208.9,238.5 209.9,239.0 210.8,239.5 211.8,240.1 212.7,240.7 213.7,241.2 214.6,241.9 215.6,242.5 216.5,243.1 217.3,243.7 218.2,244.4 219.0,245.0 219.8,245.7 220.6,246.4 221.4,247.1 222.2,247.9 223.0,248.7 223.7,249.4 224.4,250.2 225.0,250.9 225.6,251.5 226.2,252.1 226.6,252.6 227.0,253.0" fill="none" stroke="#111" stroke-width="0.9" />
<polyline points="45.0,358.3 60.0,358.2 71.7,357.5 76.7,360.8" fill="none" stroke="#ff9900" stroke-width="0.9" />
<polyline points="44.2,365.0 57.0,364.2 68.3,363.3 70.0,366.7 75.8,365.8" fill="none" stroke="#ff9900" stroke-width="0.9" />
<polyline points="224.0,398.0 223.9,398.4 223.7,398.9 223.6,399.5 223.4,400.2 223.1,400.9 222.9,401.7 222.7,402.5 222.5,403.4 222.3,404.3 222.2,405.2 222.1,406.1 222.0,407.0 222.0,407.9 222.0,409.0 222.0,410.0 222.1,411.1 222.2,412.2 222.3,413.4 222.4,414.5 222.6,415.7 222.8,416.8 223.0,417.9 223.2,419.0 223.4,420.0 223.6,421.0 223.9,421.9 224.2,422.8 224.5,423.6 224.9,424.5 225.2,425.3 225.6,426.2 226.0,427.1 226.4,428.0 226.8,428.9 227.2,429.9 227.6,431.0 228.1,432.2 228.6,433.5 229.1,435.0 229.7,436.5 230.2,438.0 230.8,439.5 231.4,441.0 231.9,442.5 232.4,443.8 232.8,444.9 233.2,445.9 233.5,446.7" fill="none" stroke="#ff9900" stroke-width="0.9" />
<polyline points="230.5,398.0 230.4,398.4 230.2,398.9 230.0,399.5 229.8,400.2 229.5,400.9 229.3,401.7 229.0,402.5 228.8,403.4 228.6,404.3 228.5,405.2 228.4,406.1 228.3,407.0 228.3,407.9 228.3,408.9 228.4,410.0 228.5,411.1 228.6,412.2 228.8,413.3 228.9,414.5 229.1,415.6 229.4,416.7 229.6,417.8 229.8,418.9 230.1,420.0 230.4,421.0 230.7,422.0 231.1,423.0 231.5,424.0 231.9,425.0 232.3,425.9 232.7,426.9 233.1,427.9 233.6,428.9 234.0,429.9 234.4,430.9 234.8,432.0 235.2,433.1 235.6,434.4 236.1,435.7 236.5,437.0 237.0,438.4 237.4,439.8 237.9,441.1 238.3,442.3 238.7,443.4 239.0,444.5 239.3,445.3 239.5,446.0" fill="none" stroke="#ff9900" stroke-width="0.9" />
<polygon transform="translate(75.0,277.3) rotate(127.0)" points="-5.5,-1.2 0.9,-1.2 0.9,-3.4 5.5,0.0 0.9,3.4 0.9,1.2 -5.5,1.2" fill="#fff"/>
<polygon transform="translate(85.3,284.5) rotate(124.0)" points="-5.5,-1.2 0.9,-1.2 0.9,-3.4 5.5,0.0 0.9,3.4 0.9,1.2 -5.5,1.2" fill="#fff"/>
<polygon points="87.0,280.5 90.5,281.5 89.5,285.0 86.5,284.0" fill="#fff" />
<polygon points="95.0,287.0 98.5,285.5 100.0,289.0 98.5,292.0 96.0,291.5" fill="#fff" />
<polygon points="105.0,294.0 108.5,293.0 110.0,296.5 108.5,299.5 106.0,299.0" fill="#fff" />
<polygon points="145.2,392.4 147.2,391.0 149.0,392.6 147.6,393.6 148.2,396.6 146.0,396.8 146.2,394.2" fill="#fff" />
<polygon points="140.7,404.9 142.7,403.5 144.5,405.1 143.1,406.1 143.7,409.1 141.5,409.3 141.7,406.7" fill="#fff" />
<polygon points="136.7,419.4 138.7,418.0 140.5,419.6 139.1,420.6 139.7,423.6 137.5,423.8 137.7,421.2" fill="#fff" />
<polygon points="132.7,430.4 134.7,429.0 136.5,430.6 135.1,431.6 135.7,434.6 133.5,434.8 133.7,432.2" fill="#fff" />
<polygon transform="translate(223.6,277.7) rotate(-132.0)" points="-5.5,-1.3 0.9,-1.3 0.9,-3.6 5.5,0.0 0.9,3.6 0.9,1.3 -5.5,1.3" fill="#fff"/>
<polygon transform="translate(231.1,268.4) rotate(-132.0)" points="-5.5,-1.3 0.9,-1.3 0.9,-3.6 5.5,0.0 0.9,3.6 0.9,1.3 -5.5,1.3" fill="#fff"/>
<polygon transform="translate(238.7,259.3) rotate(-132.0)" points="-5.5,-1.3 0.9,-1.3 0.9,-3.6 5.5,0.0 0.9,3.6 0.9,1.3 -5.5,1.3" fill="#fff"/>
<polygon transform="translate(246.3,249.7) rotate(-132.0)" points="-5.5,-1.3 0.9,-1.3 0.9,-3.6 5.5,0.0 0.9,3.6 0.9,1.3 -5.5,1.3" fill="#fff"/>
<polygon transform="translate(245.0,326.7) rotate(-90.0)" points="-5.2,-1.2 0.7,-1.2 0.7,-3.3 5.2,0.0 0.7,3.3 0.7,1.2 -5.2,1.2" fill="#fff"/>
<polygon transform="translate(257.2,326.7) rotate(-90.0)" points="-5.2,-1.2 0.7,-1.2 0.7,-3.3 5.2,0.0 0.7,3.3 0.7,1.2 -5.2,1.2" fill="#fff"/>
<polygon points="268.5,326.5 273.5,327.0 273.0,333.0 269.5,333.0" fill="#fff" />
<polygon points="280.5,330.5 285.0,329.5 285.5,332.5 282.5,333.0 282.5,336.0 280.5,336.0" fill="#fff" />
<polygon points="221.8,455.2 229.0,454.6 226.0,461.8" fill="#ff0000" stroke="#fff" stroke-width="1"/>
<polygon points="233.9,453.4 241.1,452.8 238.1,460.0" fill="#ff0000" stroke="#fff" stroke-width="1"/>
<polygon points="246.5,451.6 253.7,451.0 250.7,458.2" fill="#ff0000" stroke="#fff" stroke-width="1"/>
<polygon points="228.0,470.8 230.0,469.2 232.1,470.2 230.1,471.8 229.9,474.4 227.9,474.4" fill="#fff" />
<polygon points="240.0,469.0 242.0,467.4 244.1,468.4 242.1,470.0 241.9,472.6 239.9,472.6" fill="#fff" />
<polygon points="252.0,467.3 254.0,465.7 256.1,466.7 254.1,468.3 253.9,470.9 251.9,470.9" fill="#fff" />
<polygon transform="translate(24.0,352.0) rotate(4.0)" points="-4.8,-1.0 0.8,-1.0 0.8,-3.0 4.8,0.0 0.8,3.0 0.8,1.0 -4.8,1.0" fill="#fff"/>
<polygon transform="translate(21.5,364.0) rotate(4.0)" points="-4.8,-1.0 0.8,-1.0 0.8,-3.0 4.8,0.0 0.8,3.0 0.8,1.0 -4.8,1.0" fill="#fff"/>
<polygon points="38.6,349.9 38.2,356.3 33.0,353.7" fill="#ff0000" stroke="#fff" stroke-width="0.8"/>
<polygon points="36.2,361.9 35.8,368.3 30.6,365.7" fill="#ff0000" stroke="#fff" stroke-width="0.8"/>
<polygon points="192.8,630.5 228.1,624.5 230.6,639.0 194.9,644.5" fill="#9999ff" />
<polygon points="245.5,618.9 280.4,613.7 284.6,631.3 248.2,637.2" fill="#9999ff" />
<polyline points="209.3,627.5 211.5,642.0" fill="none" stroke="#fff" stroke-width="1" stroke-opacity="0.55"/>
<polyline points="220.0,626.0 222.0,640.5" fill="none" stroke="#fff" stroke-width="1" stroke-opacity="0.55"/>
<polyline points="258.5,617.0 261.0,635.0" fill="none" stroke="#fff" stroke-width="1" stroke-opacity="0.55"/>
<polyline points="270.5,615.2 273.5,633.0" fill="none" stroke="#fff" stroke-width="1" stroke-opacity="0.55"/>
<g transform="translate(229.6,235.5) rotate(31.0)"><rect x="-8.75" y="-4.0" width="17.5" height="8" rx="2.2" fill="#0000ff"/><rect x="-5.55" y="-2.8" width="1.3" height="5.6" fill="#4d8cff"/><rect x="3.55" y="-2.8" width="1.3" height="5.6" fill="#4d8cff"/></g>
<g transform="translate(299.3,290.0) rotate(-52.0)"><rect x="-8.0" y="-4.25" width="16" height="8.5" rx="2.2" fill="#0000ff"/><rect x="-4.8" y="-3.05" width="1.3" height="6.1" fill="#4d8cff"/><rect x="2.8" y="-3.05" width="1.3" height="6.1" fill="#4d8cff"/></g>
<g transform="translate(269.6,317.9) rotate(78.0)"><rect x="-7.75" y="-4.0" width="15.5" height="8" rx="2.2" fill="#0000ff"/><rect x="-4.55" y="-2.8" width="1.3" height="5.6" fill="#4d8cff"/><rect x="2.55" y="-2.8" width="1.3" height="5.6" fill="#4d8cff"/></g>
<g transform="translate(276.6,353.4) rotate(-72.0)"><rect x="-7.5" y="-4.0" width="15" height="8" rx="2.2" fill="#0000ff"/><rect x="-4.3" y="-2.8" width="1.3" height="5.6" fill="#4d8cff"/><rect x="2.3" y="-2.8" width="1.3" height="5.6" fill="#4d8cff"/></g>
<g transform="translate(243.9,418.2) rotate(80.0)"><rect x="-7.5" y="-4.0" width="15" height="8" rx="2.2" fill="#0000ff"/><rect x="-4.3" y="-2.8" width="1.3" height="5.6" fill="#4d8cff"/><rect x="2.3" y="-2.8" width="1.3" height="5.6" fill="#4d8cff"/></g>
<g transform="translate(390.0,202.5) rotate(-58.0)"><rect x="-6.5" y="-4.0" width="13" height="8" rx="2.2" fill="#0000ff"/><rect x="-3.3" y="-2.8" width="1.3" height="5.6" fill="#4d8cff"/><rect x="1.2999999999999998" y="-2.8" width="1.3" height="5.6" fill="#4d8cff"/></g>
<g transform="translate(261.7,611.6) rotate(83.0)"><rect x="-7.5" y="-4.25" width="15" height="8.5" rx="2.2" fill="#0000ff"/><rect x="-4.3" y="-3.05" width="1.3" height="6.1" fill="#4d8cff"/><rect x="2.3" y="-3.05" width="1.3" height="6.1" fill="#4d8cff"/></g>
<g transform="translate(199.0,634.0) rotate(82.0)"><rect x="-6.5" y="-4.25" width="13" height="8.5" rx="2.2" fill="#0000ff"/><rect x="-3.3" y="-3.05" width="1.3" height="6.1" fill="#4d8cff"/><rect x="1.2999999999999998" y="-3.05" width="1.3" height="6.1" fill="#4d8cff"/></g>
<g transform="translate(268.6,576.8) rotate(-8.5)"><rect x="-4.6" y="-19" width="9.2" height="38" rx="1.6" fill="#0000ff"/><rect x="-4.6" y="-19" width="8.6" height="8.4" rx="1.2" fill="#050505"/><rect x="-3" y="-18.2" width="5.6" height="1.6" fill="#3f8fe8"/></g>
<rect x="0" y="637.5" width="390" height="41" fill="#fff" fill-opacity="0.6"/>
<rect x="198.4" y="653.8" width="11.4" height="26" rx="2" fill="#9b9bff" transform="rotate(-9 204 666)"/>
<ellipse cx="220.5" cy="675.5" rx="4" ry="2.6" fill="#7f7fff"/>
<ellipse cx="289" cy="676" rx="4" ry="2.6" fill="#7f7fff"/>
<rect x="-2" y="660" width="168" height="10.5" fill="none" stroke="#000" stroke-width="1.6"/>
<rect x="-2" y="660" width="69" height="10.5" fill="#000"/>
<g font-family="Liberation Sans, sans-serif" font-size="11px" fill="#000"><text x="-2.5" y="657">0</text><text x="177.5" y="672">50 m</text><text x="307.5" y="672" textLength="82" lengthAdjust="spacing">426340, 4581400</text></g>
<rect x="384" y="0" width="6" height="678" fill="url(#shd)"/>
</svg>
<div style="left:0px;top:678px;width:390px;height:4px;background:linear-gradient(#f4f4f4,#e9e9e9);"></div>
<div style="left:0px;top:682px;width:390px;height:1px;background:#b9b9b9;"></div>
<div style="left:0px;top:683px;width:390px;height:6px;background:#fff;"></div>
<div style="left:99px;top:683px;width:1px;height:6px;background:#d0d0d0;"></div>
<div style="left:120px;top:683px;width:1px;height:6px;background:#d0d0d0;"></div>
<div style="left:240px;top:683px;width:1px;height:6px;background:#d0d0d0;"></div>
<div style="left:261px;top:683px;width:1px;height:6px;background:#d0d0d0;"></div>
<div style="left:390px;top:0px;width:811px;height:689px;background:#f0f0f0;"></div>
<div style="left:390px;top:0px;width:811px;height:1px;background:#fff;"></div>
<div style="left:401px;top:32px;width:789px;height:621px;background:#fff;border:1px solid #d9d9d9;box-sizing:border-box;"></div>
<div class="tab" style="left:449px;top:14px;width:61px;height:19px;background:#f0f0f0;border:1px solid #d9d9d9;box-sizing:border-box;line-height:18px;padding-left:1px">Conflicts</div>
<div class="tab" style="left:401px;top:12px;width:48px;height:21px;background:#fff;border:1px solid #d9d9d9;border-bottom:none;box-sizing:border-box;line-height:20px;padding-right:4px">Main</div>
<div style="left:423px;top:74px;width:743px;height:525px;background:#fff;border:1px solid #d9d9d9;box-sizing:border-box;box-shadow:1px 1px 0 #f0f0f0;"></div>
<div class="tab" style="left:425px;top:56px;width:103px;height:19px;background:#f0f0f0;border:1px solid #d9d9d9;box-sizing:border-box;line-height:18px;letter-spacing:0.2px;">Trajectory: 2747</div>
<div class="tab" style="left:527px;top:56px;width:82px;height:19px;background:#f0f0f0;border:1px solid #d9d9d9;box-sizing:border-box;line-height:18px;">Static Model</div>
<div class="tab" style="left:689px;top:56px;width:69px;height:19px;background:#f0f0f0;border:1px solid #d9d9d9;box-sizing:border-box;line-height:18px;">Attributes</div>
<div class="tab" style="left:608px;top:54px;width:82px;height:21px;background:#fff;border:1px solid #d9d9d9;border-bottom:none;box-sizing:border-box;line-height:20px;">Time Series</div>
<div style="left:443px;top:94px;width:703px;height:43px;background:#fff;border:1px solid #dadada;box-sizing:border-box;"></div>
<div class="btn" style="left:451px;top:105px;width:73px;height:21px;line-height:21px;">Variables</div>
<div class="btn" style="left:547px;top:102px;width:28px;height:28px;line-height:28px;background:#cce4f7;border-color:#005499;"></div>
<div class="btn" style="left:577px;top:102px;width:28px;height:28px;line-height:28px;"></div>
<div class="btn" style="left:607px;top:102px;width:28px;height:28px;line-height:28px;"></div>
<div class="btn" style="left:637px;top:102px;width:28px;height:28px;line-height:28px;"></div>
<div class="btn" style="left:682px;top:102px;width:28px;height:28px;line-height:28px;"></div>
<div class="btn" style="left:712px;top:102px;width:28px;height:28px;line-height:28px;"></div>
<div class="btn" style="left:1065px;top:102px;width:73px;height:28px;line-height:28px;text-align:left;padding-left:14px;">Action</div>
<div class="btn" style="left:1061px;top:608px;width:106px;height:21px;line-height:21px;letter-spacing:-0.1px;">Show All Trajectories</div>
<div class="btn" style="left:402px;top:661px;width:73px;height:21px;line-height:21px;">Help</div>
<div class="btn" style="left:1037px;top:661px;width:73px;height:21px;line-height:21px;">OK</div>
<div class="btn" style="left:1118px;top:661px;width:73px;height:21px;line-height:21px;">Cancel</div>
<svg width="1201" height="689" viewBox="0 0 1201 689" style="pointer-events:none">
<g shape-rendering="crispEdges" fill="#000">
<rect x="491" y="149" width="1" height="377"/>
<rect x="483" y="149" width="8" height="1"/>
<rect x="487" y="162" width="4" height="1"/>
<rect x="487" y="176" width="4" height="1"/>
<rect x="487" y="189" width="4" height="1"/>
<rect x="483" y="203" width="8" height="1"/>
<rect x="487" y="216" width="4" height="1"/>
<rect x="487" y="230" width="4" height="1"/>
<rect x="487" y="243" width="4" height="1"/>
<rect x="483" y="256" width="8" height="1"/>
<rect x="487" y="270" width="4" height="1"/>
<rect x="487" y="283" width="4" height="1"/>
<rect x="487" y="297" width="4" height="1"/>
<rect x="483" y="310" width="8" height="1"/>
<rect x="487" y="324" width="4" height="1"/>
<rect x="487" y="337" width="4" height="1"/>
<rect x="487" y="350" width="4" height="1"/>
<rect x="483" y="364" width="8" height="1"/>
<rect x="487" y="377" width="4" height="1"/>
<rect x="487" y="391" width="4" height="1"/>
<rect x="487" y="404" width="4" height="1"/>
<rect x="483" y="418" width="8" height="1"/>
<rect x="487" y="431" width="4" height="1"/>
<rect x="487" y="444" width="4" height="1"/>
<rect x="487" y="458" width="4" height="1"/>
<rect x="483" y="471" width="8" height="1"/>
<rect x="487" y="485" width="4" height="1"/>
<rect x="487" y="498" width="4" height="1"/>
<rect x="487" y="512" width="4" height="1"/>
<rect x="483" y="525" width="8" height="1"/>
<rect x="498" y="532" width="632" height="1"/>
<rect x="498" y="532" width="1" height="8"/>
<rect x="523" y="532" width="1" height="4"/>
<rect x="548" y="532" width="1" height="4"/>
<rect x="574" y="532" width="1" height="4"/>
<rect x="599" y="532" width="1" height="4"/>
<rect x="624" y="532" width="1" height="8"/>
<rect x="649" y="532" width="1" height="4"/>
<rect x="675" y="532" width="1" height="4"/>
<rect x="700" y="532" width="1" height="4"/>
<rect x="725" y="532" width="1" height="4"/>
<rect x="750" y="532" width="1" height="8"/>
<rect x="776" y="532" width="1" height="4"/>
<rect x="801" y="532" width="1" height="4"/>
<rect x="826" y="532" width="1" height="4"/>
<rect x="851" y="532" width="1" height="4"/>
<rect x="877" y="532" width="1" height="8"/>
<rect x="902" y="532" width="1" height="4"/>
<rect x="927" y="532" width="1" height="4"/>
<rect x="952" y="532" width="1" height="4"/>
<rect x="978" y="532" width="1" height="4"/>
<rect x="1003" y="532" width="1" height="8"/>
<rect x="1028" y="532" width="1" height="4"/>
<rect x="1053" y="532" width="1" height="4"/>
<rect x="1079" y="532" width="1" height="4"/>
<rect x="1104" y="532" width="1" height="4"/>
<rect x="1129" y="532" width="1" height="8"/>
</g>
<g font-family="Liberation Sans, sans-serif" font-size="13px" fill="#000">
<text x="478" y="154.2" text-anchor="end">40</text>
<text x="478" y="207.9" text-anchor="end">38</text>
<text x="478" y="261.6" text-anchor="end">36</text>
<text x="478" y="315.3" text-anchor="end">34</text>
<text x="478" y="369.1" text-anchor="end">32</text>
<text x="478" y="422.8" text-anchor="end">30</text>
<text x="478" y="476.5" text-anchor="end">28</text>
<text x="478" y="530.2" text-anchor="end">26</text>
<text x="497.7" y="555.2" text-anchor="middle">08:10</text>
<text x="623.9" y="555.2" text-anchor="middle">08:20</text>
<text x="750.1" y="555.2" text-anchor="middle">08:30</text>
<text x="876.3" y="555.2" text-anchor="middle">08:40</text>
<text x="1002.5" y="555.2" text-anchor="middle">08:50</text>
<text x="1128.7" y="555.2" text-anchor="middle">09:00</text>
</g>
<text transform="translate(457.6,337) rotate(-90)" text-anchor="middle" font-family="Liberation Sans, sans-serif" font-weight="bold" font-size="15.5px" textLength="96" lengthAdjust="spacing">Count (veh)</text>
<clipPath id="cc"><rect x="494" y="140" width="660" height="392"/></clipPath>
<g clip-path="url(#cc)">
<polyline fill="none" stroke="#0000ff" stroke-width="2" stroke-linejoin="round" points="498.5,418.1 624.7,364.4 750.9,525.5 877.1,471.8 1003.3,444.9 1129.5,176.4"/>
<circle cx="498.5" cy="418.1" r="5.8" fill="#0000ff"/>
<circle cx="624.7" cy="364.4" r="5.8" fill="#0000ff"/>
<circle cx="750.9" cy="525.5" r="5.8" fill="#0000ff"/>
<circle cx="877.1" cy="471.8" r="5.8" fill="#0000ff"/>
<circle cx="1003.3" cy="444.9" r="5.8" fill="#0000ff"/>
<circle cx="1129.5" cy="176.4" r="5.8" fill="#0000ff"/>
</g>
<rect x="716" y="566" width="8" height="8" fill="#0000ff" shape-rendering="crispEdges"/>
<text x="729.5" y="574" font-family="Liberation Sans, sans-serif" font-size="11px" textLength="193.5" lengthAdjust="spacing">Count - Replication Micro path - All (veh)</text>
</svg>
<svg width="1201" height="689" viewBox="0 0 1201 689" style="pointer-events:none">
<defs><linearGradient id="g1" x1="0" y1="0" x2="0" y2="1"><stop offset="0" stop-color="#fdfdfd"/><stop offset="0.45" stop-color="#cfcfcf"/><stop offset="1" stop-color="#8c8c8c"/></linearGradient><linearGradient id="g2" x1="0" y1="0" x2="0" y2="1"><stop offset="0" stop-color="#d4d4d4"/><stop offset="0.65" stop-color="#7c7c7c"/><stop offset="1" stop-color="#8a8a8a"/></linearGradient><linearGradient id="g3" x1="0" y1="0" x2="0" y2="1"><stop offset="0" stop-color="#f0f0f0"/><stop offset="0.48" stop-color="#d6d6d6"/><stop offset="0.52" stop-color="#b4b4b4"/><stop offset="1" stop-color="#858585"/></linearGradient><linearGradient id="g4" x1="0" y1="0" x2="0" y2="1"><stop offset="0" stop-color="#dcdcdc"/><stop offset="0.3" stop-color="#f4f4f4"/><stop offset="1" stop-color="#ffffff"/></linearGradient></defs>
<rect x="554.5" y="109.5" width="15" height="15" fill="url(#g1)" stroke="#8a8a8a" stroke-width="1"/><polyline points="555,120.6 558,118 560,119.6 564,115.6 565.6,116.6 569,113.2" fill="none" stroke="#4a4a4a" stroke-width="1.1"/>
<rect x="583.5" y="108.5" width="15" height="15" fill="url(#g2)" stroke="#858585" stroke-width="1"/><polygon points="584,120 587,117.5 589,118.6 593,114 594.5,115.2 598,111.4 598,123 584,123" fill="#ffffff"/><polygon points="584,122 586.5,120.4 589,121.6 592,119.6 595,121 598,119.8 598,123 584,123" fill="#cfcfcf"/><rect x="583.5" y="108.5" width="15" height="15" fill="none" stroke="#858585" stroke-width="1"/>
<rect x="613.5" y="108.5" width="15" height="15" fill="url(#g2)" stroke="#858585" stroke-width="1"/><polygon points="614,120 617,117.5 619,118.6 623,114 624.5,115.2 628,111.4 628,123 614,123" fill="#ffffff"/><polygon points="614,122 616.5,120.4 619,121.6 622,119.6 625,121 628,119.8 628,123 614,123" fill="#cfcfcf"/><rect x="613.5" y="108.5" width="15" height="15" fill="none" stroke="#858585" stroke-width="1"/><path d="M621.2,119.2 h6 M624.2,116.2 v6" stroke="#4f4f4f" stroke-width="1.5" fill="none"/>
<rect x="643.5" y="108.5" width="15" height="15" fill="#ececec" stroke="#8c8c8c" stroke-width="1"/><path d="M648.5,108.5 v15 M653.5,108.5 v15 M643.5,113.5 h15 M643.5,118.5 h15" stroke="#9a9a9a" stroke-width="1" fill="none"/><rect x="645.1" y="110.1" width="1.8" height="1.8" fill="#555"/><rect x="645.1" y="115.1" width="1.8" height="1.8" fill="#555"/><rect x="645.1" y="120.1" width="1.8" height="1.8" fill="#555"/><rect x="650.1" y="110.1" width="1.8" height="1.8" fill="#555"/><rect x="650.1" y="115.1" width="1.8" height="1.8" fill="#555"/><rect x="650.1" y="120.1" width="1.8" height="1.8" fill="#555"/><rect x="655.1" y="110.1" width="1.8" height="1.8" fill="#555"/><rect x="655.1" y="115.1" width="1.8" height="1.8" fill="#555"/><rect x="655.1" y="120.1" width="1.8" height="1.8" fill="#555"/>
<rect x="690" y="110" width="2" height="11" fill="#000"/><polygon points="692,115.5 701,110 701,121" fill="#000"/>
<rect x="730" y="110" width="2" height="11" fill="#000"/><polygon points="730,115.5 721,110 721,121" fill="#000"/>
<rect x="762.5" y="109.5" width="12" height="12" fill="#fff" stroke="#333" stroke-width="1"/>
<rect x="811.5" y="109.5" width="12" height="12" fill="#fff" stroke="#333" stroke-width="1"/>
<rect x="860.5" y="109.5" width="12" height="12" fill="#fff" stroke="#333" stroke-width="1"/>
<polyline points="862.6,115.8 865.3,118.7 870.8,112.4" fill="none" stroke="#333" stroke-width="1.3"/>
<rect x="780.5" y="109.5" width="15" height="14" fill="url(#g4)" stroke="#a6a6a6" stroke-width="1"/><rect x="780" y="122.4" width="16" height="1.6" fill="#8e8e8e"/><rect x="781" y="110" width="14" height="3" fill="#e2e2e2"/><rect x="782.9" y="108" width="1.2" height="3.4" fill="#666"/><rect x="787.4" y="108" width="1.2" height="3.4" fill="#666"/><rect x="791.9" y="108" width="1.2" height="3.4" fill="#666"/><path d="M785.5,116.3 h8 M782.5,118.4 h11 M782.5,120.5 h8.4" stroke="#8a8a8a" stroke-width="0.9" stroke-dasharray="1.6 0.7" fill="none"/>
<rect x="829.5" y="108.5" width="15" height="15" fill="url(#g3)" stroke="#8a8a8a" stroke-width="1"/><polyline points="830,119.6 833,116.6 835.5,118 839,114 840.5,115 844,112" fill="none" stroke="#4a4a4a" stroke-width="1.1"/>
<rect x="878.5" y="108.5" width="15" height="15" fill="url(#g3)" stroke="#8a8a8a" stroke-width="1"/><polyline points="879,119 882.5,116 884.5,117.4 888.5,113.4 890,114.4 893,110" fill="none" stroke="#4a4a4a" stroke-width="1.1"/><polyline points="879,121.6 882.5,118.6 884.5,120 888.5,116 890,117 893,112.6" fill="none" stroke="#fff" stroke-width="1.1"/>
<polygon points="1125,114 1132,114 1128.5,118" fill="#000"/>
</svg>
</body></html>
